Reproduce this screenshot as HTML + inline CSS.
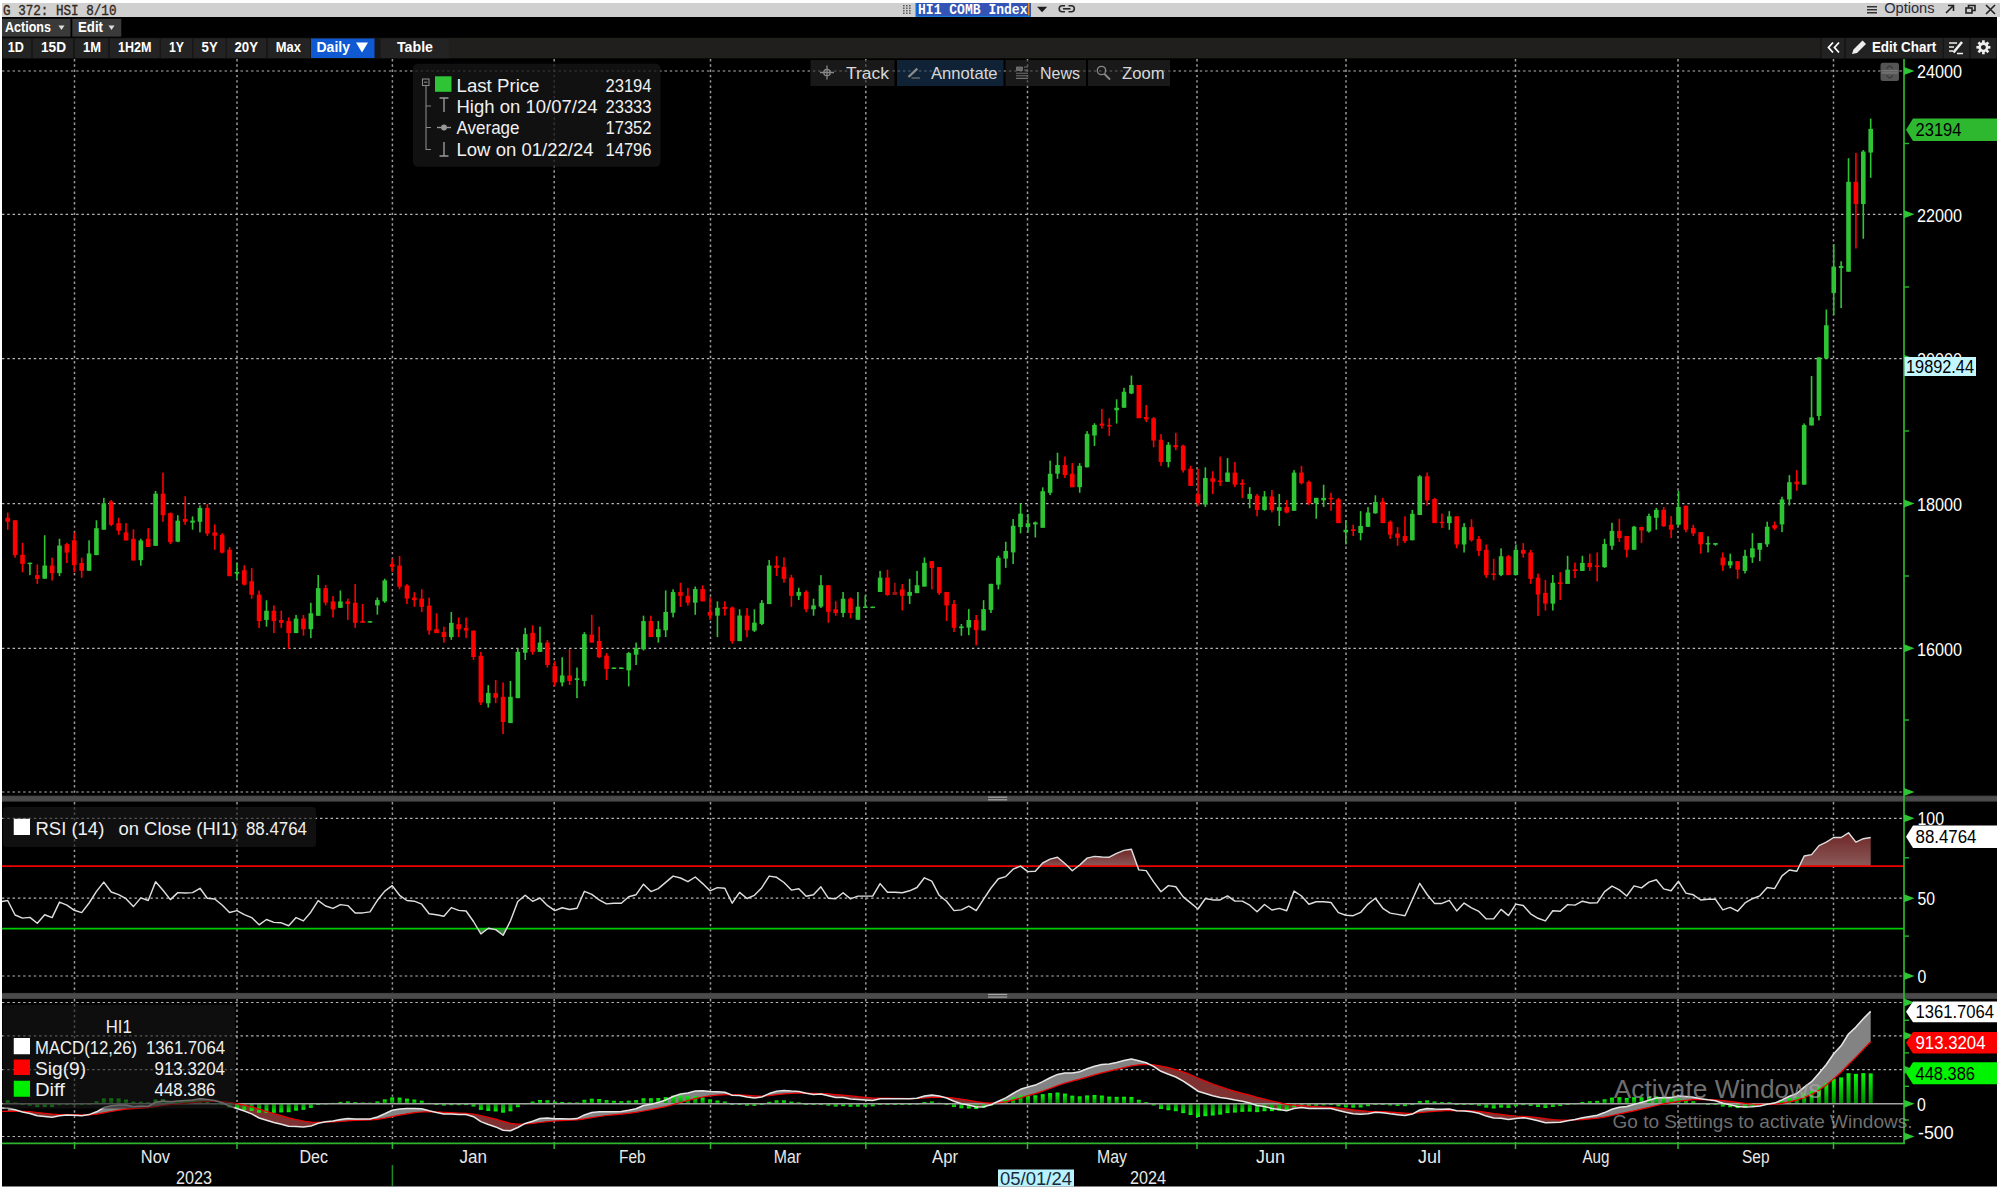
<!DOCTYPE html>
<html><head><meta charset="utf-8"><title>G 372: HSI 8/10</title>
<style>html,body{margin:0;padding:0;background:#000;}body{width:2000px;height:1188px;overflow:hidden;}svg{display:block;font-family:'Liberation Sans', sans-serif;}</style></head>
<body><svg width="2000" height="1188" viewBox="0 0 2000 1188">
<rect x="0.00" y="0.00" width="2000.00" height="1188.00" fill="#000"/>
<line x1="74.50" y1="59.00" x2="74.50" y2="796.00" stroke="#9a9a9a" stroke-width="1.5" stroke-dasharray="2.4 2.9"/>
<line x1="237.00" y1="59.00" x2="237.00" y2="796.00" stroke="#9a9a9a" stroke-width="1.5" stroke-dasharray="2.4 2.9"/>
<line x1="392.40" y1="59.00" x2="392.40" y2="796.00" stroke="#9a9a9a" stroke-width="1.5" stroke-dasharray="2.4 2.9"/>
<line x1="554.20" y1="59.00" x2="554.20" y2="796.00" stroke="#9a9a9a" stroke-width="1.5" stroke-dasharray="2.4 2.9"/>
<line x1="710.50" y1="59.00" x2="710.50" y2="796.00" stroke="#9a9a9a" stroke-width="1.5" stroke-dasharray="2.4 2.9"/>
<line x1="865.80" y1="59.00" x2="865.80" y2="796.00" stroke="#9a9a9a" stroke-width="1.5" stroke-dasharray="2.4 2.9"/>
<line x1="1027.50" y1="59.00" x2="1027.50" y2="796.00" stroke="#9a9a9a" stroke-width="1.5" stroke-dasharray="2.4 2.9"/>
<line x1="1197.00" y1="59.00" x2="1197.00" y2="796.00" stroke="#9a9a9a" stroke-width="1.5" stroke-dasharray="2.4 2.9"/>
<line x1="1346.00" y1="59.00" x2="1346.00" y2="796.00" stroke="#9a9a9a" stroke-width="1.5" stroke-dasharray="2.4 2.9"/>
<line x1="1515.50" y1="59.00" x2="1515.50" y2="796.00" stroke="#9a9a9a" stroke-width="1.5" stroke-dasharray="2.4 2.9"/>
<line x1="1678.00" y1="59.00" x2="1678.00" y2="796.00" stroke="#9a9a9a" stroke-width="1.5" stroke-dasharray="2.4 2.9"/>
<line x1="1833.50" y1="59.00" x2="1833.50" y2="796.00" stroke="#9a9a9a" stroke-width="1.5" stroke-dasharray="2.4 2.9"/>
<line x1="2.00" y1="71.00" x2="1904.00" y2="71.00" stroke="#b8b8b8" stroke-width="1.2" stroke-dasharray="2.4 2.9"/>
<line x1="2.00" y1="214.30" x2="1904.00" y2="214.30" stroke="#b8b8b8" stroke-width="1.2" stroke-dasharray="2.4 2.9"/>
<line x1="2.00" y1="358.70" x2="1904.00" y2="358.70" stroke="#b8b8b8" stroke-width="1.2" stroke-dasharray="2.4 2.9"/>
<line x1="2.00" y1="503.60" x2="1904.00" y2="503.60" stroke="#b8b8b8" stroke-width="1.2" stroke-dasharray="2.4 2.9"/>
<line x1="2.00" y1="648.30" x2="1904.00" y2="648.30" stroke="#b8b8b8" stroke-width="1.2" stroke-dasharray="2.4 2.9"/>
<line x1="2.00" y1="792.00" x2="1904.00" y2="792.00" stroke="#b8b8b8" stroke-width="1.2" stroke-dasharray="2.4 2.9"/>
<line x1="74.50" y1="802.00" x2="74.50" y2="993.00" stroke="#9a9a9a" stroke-width="1.5" stroke-dasharray="2.4 2.9"/>
<line x1="237.00" y1="802.00" x2="237.00" y2="993.00" stroke="#9a9a9a" stroke-width="1.5" stroke-dasharray="2.4 2.9"/>
<line x1="392.40" y1="802.00" x2="392.40" y2="993.00" stroke="#9a9a9a" stroke-width="1.5" stroke-dasharray="2.4 2.9"/>
<line x1="554.20" y1="802.00" x2="554.20" y2="993.00" stroke="#9a9a9a" stroke-width="1.5" stroke-dasharray="2.4 2.9"/>
<line x1="710.50" y1="802.00" x2="710.50" y2="993.00" stroke="#9a9a9a" stroke-width="1.5" stroke-dasharray="2.4 2.9"/>
<line x1="865.80" y1="802.00" x2="865.80" y2="993.00" stroke="#9a9a9a" stroke-width="1.5" stroke-dasharray="2.4 2.9"/>
<line x1="1027.50" y1="802.00" x2="1027.50" y2="993.00" stroke="#9a9a9a" stroke-width="1.5" stroke-dasharray="2.4 2.9"/>
<line x1="1197.00" y1="802.00" x2="1197.00" y2="993.00" stroke="#9a9a9a" stroke-width="1.5" stroke-dasharray="2.4 2.9"/>
<line x1="1346.00" y1="802.00" x2="1346.00" y2="993.00" stroke="#9a9a9a" stroke-width="1.5" stroke-dasharray="2.4 2.9"/>
<line x1="1515.50" y1="802.00" x2="1515.50" y2="993.00" stroke="#9a9a9a" stroke-width="1.5" stroke-dasharray="2.4 2.9"/>
<line x1="1678.00" y1="802.00" x2="1678.00" y2="993.00" stroke="#9a9a9a" stroke-width="1.5" stroke-dasharray="2.4 2.9"/>
<line x1="1833.50" y1="802.00" x2="1833.50" y2="993.00" stroke="#9a9a9a" stroke-width="1.5" stroke-dasharray="2.4 2.9"/>
<line x1="2.00" y1="818.30" x2="1904.00" y2="818.30" stroke="#b8b8b8" stroke-width="1.2" stroke-dasharray="2.4 2.9"/>
<line x1="2.00" y1="898.20" x2="1904.00" y2="898.20" stroke="#b8b8b8" stroke-width="1.2" stroke-dasharray="2.4 2.9"/>
<line x1="2.00" y1="976.00" x2="1904.00" y2="976.00" stroke="#b8b8b8" stroke-width="1.2" stroke-dasharray="2.4 2.9"/>
<line x1="74.50" y1="999.00" x2="74.50" y2="1143.00" stroke="#9a9a9a" stroke-width="1.5" stroke-dasharray="2.4 2.9"/>
<line x1="237.00" y1="999.00" x2="237.00" y2="1143.00" stroke="#9a9a9a" stroke-width="1.5" stroke-dasharray="2.4 2.9"/>
<line x1="392.40" y1="999.00" x2="392.40" y2="1143.00" stroke="#9a9a9a" stroke-width="1.5" stroke-dasharray="2.4 2.9"/>
<line x1="554.20" y1="999.00" x2="554.20" y2="1143.00" stroke="#9a9a9a" stroke-width="1.5" stroke-dasharray="2.4 2.9"/>
<line x1="710.50" y1="999.00" x2="710.50" y2="1143.00" stroke="#9a9a9a" stroke-width="1.5" stroke-dasharray="2.4 2.9"/>
<line x1="865.80" y1="999.00" x2="865.80" y2="1143.00" stroke="#9a9a9a" stroke-width="1.5" stroke-dasharray="2.4 2.9"/>
<line x1="1027.50" y1="999.00" x2="1027.50" y2="1143.00" stroke="#9a9a9a" stroke-width="1.5" stroke-dasharray="2.4 2.9"/>
<line x1="1197.00" y1="999.00" x2="1197.00" y2="1143.00" stroke="#9a9a9a" stroke-width="1.5" stroke-dasharray="2.4 2.9"/>
<line x1="1346.00" y1="999.00" x2="1346.00" y2="1143.00" stroke="#9a9a9a" stroke-width="1.5" stroke-dasharray="2.4 2.9"/>
<line x1="1515.50" y1="999.00" x2="1515.50" y2="1143.00" stroke="#9a9a9a" stroke-width="1.5" stroke-dasharray="2.4 2.9"/>
<line x1="1678.00" y1="999.00" x2="1678.00" y2="1143.00" stroke="#9a9a9a" stroke-width="1.5" stroke-dasharray="2.4 2.9"/>
<line x1="1833.50" y1="999.00" x2="1833.50" y2="1143.00" stroke="#9a9a9a" stroke-width="1.5" stroke-dasharray="2.4 2.9"/>
<line x1="2.00" y1="1002.50" x2="1904.00" y2="1002.50" stroke="#b8b8b8" stroke-width="1.2" stroke-dasharray="2.4 2.9"/>
<line x1="2.00" y1="1035.80" x2="1904.00" y2="1035.80" stroke="#b8b8b8" stroke-width="1.2" stroke-dasharray="2.4 2.9"/>
<line x1="2.00" y1="1069.70" x2="1904.00" y2="1069.70" stroke="#b8b8b8" stroke-width="1.2" stroke-dasharray="2.4 2.9"/>
<line x1="2.00" y1="1136.50" x2="1904.00" y2="1136.50" stroke="#b8b8b8" stroke-width="1.2" stroke-dasharray="2.4 2.9"/>
<!--CANDLES-->
<rect x="6.94" y="512.53" width="1.60" height="17.17" fill="#ff0000"/>
<rect x="5.44" y="517.74" width="4.60" height="4.04" fill="#ff0000"/>
<rect x="14.33" y="520.27" width="1.60" height="37.37" fill="#ff0000"/>
<rect x="12.83" y="520.27" width="4.60" height="34.85" fill="#ff0000"/>
<rect x="21.73" y="542.83" width="1.60" height="29.46" fill="#ff0000"/>
<rect x="20.23" y="554.78" width="4.60" height="9.09" fill="#ff0000"/>
<rect x="29.12" y="562.69" width="1.60" height="12.46" fill="#2fc435"/>
<rect x="27.62" y="562.69" width="4.60" height="1.50" fill="#2fc435"/>
<rect x="36.51" y="564.38" width="1.60" height="19.70" fill="#ff0000"/>
<rect x="35.01" y="575.15" width="4.60" height="3.87" fill="#ff0000"/>
<rect x="43.90" y="535.25" width="1.60" height="43.43" fill="#2fc435"/>
<rect x="42.40" y="565.56" width="4.60" height="13.13" fill="#2fc435"/>
<rect x="51.30" y="557.64" width="1.60" height="22.90" fill="#ff0000"/>
<rect x="49.80" y="565.56" width="4.60" height="7.58" fill="#ff0000"/>
<rect x="58.69" y="538.79" width="1.60" height="37.37" fill="#2fc435"/>
<rect x="57.19" y="545.52" width="4.60" height="27.61" fill="#2fc435"/>
<rect x="66.08" y="542.83" width="1.60" height="20.20" fill="#ff0000"/>
<rect x="64.58" y="544.18" width="4.60" height="8.42" fill="#ff0000"/>
<rect x="73.47" y="532.39" width="1.60" height="39.90" fill="#ff0000"/>
<rect x="71.97" y="540.30" width="4.60" height="24.92" fill="#ff0000"/>
<rect x="80.87" y="557.64" width="1.60" height="20.20" fill="#ff0000"/>
<rect x="79.37" y="563.03" width="4.60" height="7.74" fill="#ff0000"/>
<rect x="88.26" y="540.30" width="1.60" height="30.47" fill="#2fc435"/>
<rect x="86.76" y="553.43" width="4.60" height="17.34" fill="#2fc435"/>
<rect x="95.65" y="520.27" width="1.60" height="34.85" fill="#2fc435"/>
<rect x="94.15" y="528.18" width="4.60" height="26.94" fill="#2fc435"/>
<rect x="103.05" y="497.88" width="1.60" height="31.82" fill="#2fc435"/>
<rect x="101.55" y="503.27" width="4.60" height="26.43" fill="#2fc435"/>
<rect x="110.44" y="500.07" width="1.60" height="25.93" fill="#ff0000"/>
<rect x="108.94" y="501.41" width="4.60" height="23.40" fill="#ff0000"/>
<rect x="117.83" y="517.74" width="1.60" height="17.17" fill="#ff0000"/>
<rect x="116.33" y="523.13" width="4.60" height="7.58" fill="#ff0000"/>
<rect x="125.22" y="523.13" width="1.60" height="17.34" fill="#ff0000"/>
<rect x="123.72" y="532.39" width="4.60" height="8.08" fill="#ff0000"/>
<rect x="132.62" y="529.36" width="1.60" height="31.14" fill="#ff0000"/>
<rect x="131.12" y="538.79" width="4.60" height="21.72" fill="#ff0000"/>
<rect x="140.01" y="538.79" width="1.60" height="26.94" fill="#2fc435"/>
<rect x="138.51" y="540.47" width="4.60" height="19.70" fill="#2fc435"/>
<rect x="147.40" y="528.18" width="1.60" height="18.86" fill="#ff0000"/>
<rect x="145.90" y="538.79" width="4.60" height="8.25" fill="#ff0000"/>
<rect x="154.79" y="490.98" width="1.60" height="54.88" fill="#2fc435"/>
<rect x="153.29" y="493.67" width="4.60" height="52.19" fill="#2fc435"/>
<rect x="162.19" y="472.63" width="1.60" height="49.16" fill="#ff0000"/>
<rect x="160.69" y="493.67" width="4.60" height="21.55" fill="#ff0000"/>
<rect x="169.58" y="512.53" width="1.60" height="31.65" fill="#ff0000"/>
<rect x="168.08" y="513.20" width="4.60" height="28.96" fill="#ff0000"/>
<rect x="176.97" y="515.22" width="1.60" height="26.94" fill="#2fc435"/>
<rect x="175.47" y="520.61" width="4.60" height="21.04" fill="#2fc435"/>
<rect x="184.36" y="496.20" width="1.60" height="28.62" fill="#ff0000"/>
<rect x="182.86" y="518.92" width="4.60" height="2.86" fill="#ff0000"/>
<rect x="191.76" y="516.40" width="1.60" height="13.30" fill="#2fc435"/>
<rect x="190.26" y="520.61" width="4.60" height="2.02" fill="#2fc435"/>
<rect x="199.15" y="505.45" width="1.60" height="26.94" fill="#2fc435"/>
<rect x="197.65" y="507.98" width="4.60" height="13.80" fill="#2fc435"/>
<rect x="206.54" y="504.11" width="1.60" height="31.99" fill="#ff0000"/>
<rect x="205.04" y="507.98" width="4.60" height="25.59" fill="#ff0000"/>
<rect x="213.94" y="524.48" width="1.60" height="25.25" fill="#ff0000"/>
<rect x="212.44" y="532.39" width="4.60" height="3.37" fill="#ff0000"/>
<rect x="221.33" y="533.23" width="1.60" height="20.20" fill="#ff0000"/>
<rect x="219.83" y="534.92" width="4.60" height="17.68" fill="#ff0000"/>
<rect x="228.72" y="547.04" width="1.60" height="29.12" fill="#ff0000"/>
<rect x="227.22" y="549.73" width="4.60" height="26.43" fill="#ff0000"/>
<rect x="236.11" y="562.69" width="1.60" height="16.33" fill="#2fc435"/>
<rect x="234.61" y="571.95" width="4.60" height="1.68" fill="#2fc435"/>
<rect x="243.51" y="565.22" width="1.60" height="20.20" fill="#ff0000"/>
<rect x="242.01" y="570.27" width="4.60" height="14.31" fill="#ff0000"/>
<rect x="250.90" y="568.11" width="1.60" height="30.47" fill="#ff0000"/>
<rect x="249.40" y="581.25" width="4.60" height="13.47" fill="#ff0000"/>
<rect x="258.29" y="590.51" width="1.60" height="37.54" fill="#ff0000"/>
<rect x="256.79" y="594.71" width="4.60" height="26.43" fill="#ff0000"/>
<rect x="265.68" y="600.27" width="1.60" height="26.43" fill="#2fc435"/>
<rect x="264.18" y="610.71" width="4.60" height="9.26" fill="#2fc435"/>
<rect x="273.08" y="605.32" width="1.60" height="27.78" fill="#ff0000"/>
<rect x="271.58" y="610.71" width="4.60" height="10.44" fill="#ff0000"/>
<rect x="280.47" y="610.71" width="1.60" height="17.17" fill="#ff0000"/>
<rect x="278.97" y="619.97" width="4.60" height="2.86" fill="#ff0000"/>
<rect x="287.86" y="617.44" width="1.60" height="31.48" fill="#ff0000"/>
<rect x="286.36" y="621.14" width="4.60" height="11.95" fill="#ff0000"/>
<rect x="295.26" y="614.92" width="1.60" height="18.18" fill="#2fc435"/>
<rect x="293.76" y="618.62" width="4.60" height="14.48" fill="#2fc435"/>
<rect x="302.65" y="614.92" width="1.60" height="20.71" fill="#ff0000"/>
<rect x="301.15" y="618.62" width="4.60" height="10.61" fill="#ff0000"/>
<rect x="310.04" y="602.79" width="1.60" height="35.35" fill="#2fc435"/>
<rect x="308.54" y="613.23" width="4.60" height="15.99" fill="#2fc435"/>
<rect x="317.43" y="575.02" width="1.60" height="40.74" fill="#2fc435"/>
<rect x="315.93" y="588.15" width="4.60" height="27.61" fill="#2fc435"/>
<rect x="324.83" y="585.12" width="1.60" height="20.20" fill="#ff0000"/>
<rect x="323.33" y="588.15" width="4.60" height="14.48" fill="#ff0000"/>
<rect x="332.22" y="596.06" width="1.60" height="21.38" fill="#ff0000"/>
<rect x="330.72" y="601.45" width="4.60" height="7.91" fill="#ff0000"/>
<rect x="339.61" y="590.51" width="1.60" height="17.34" fill="#2fc435"/>
<rect x="338.11" y="601.45" width="4.60" height="6.40" fill="#2fc435"/>
<rect x="347.00" y="598.59" width="1.60" height="21.38" fill="#ff0000"/>
<rect x="345.50" y="601.45" width="4.60" height="2.53" fill="#ff0000"/>
<rect x="354.40" y="584.11" width="1.60" height="43.77" fill="#ff0000"/>
<rect x="352.90" y="602.79" width="4.60" height="20.03" fill="#ff0000"/>
<rect x="361.79" y="603.97" width="1.60" height="18.52" fill="#ff0000"/>
<rect x="360.29" y="621.14" width="4.60" height="1.68" fill="#ff0000"/>
<rect x="369.18" y="621.14" width="1.60" height="1.35" fill="#2fc435"/>
<rect x="367.68" y="621.14" width="4.60" height="1.50" fill="#2fc435"/>
<rect x="376.57" y="597.58" width="1.60" height="17.00" fill="#2fc435"/>
<rect x="375.07" y="600.10" width="4.60" height="5.22" fill="#2fc435"/>
<rect x="383.97" y="578.72" width="1.60" height="24.07" fill="#2fc435"/>
<rect x="382.47" y="580.40" width="4.60" height="21.04" fill="#2fc435"/>
<rect x="391.36" y="558.52" width="1.60" height="13.47" fill="#ff0000"/>
<rect x="389.86" y="564.07" width="4.60" height="2.86" fill="#ff0000"/>
<rect x="398.75" y="555.99" width="1.60" height="33.33" fill="#ff0000"/>
<rect x="397.25" y="565.59" width="4.60" height="21.21" fill="#ff0000"/>
<rect x="406.15" y="584.11" width="1.60" height="19.87" fill="#ff0000"/>
<rect x="404.65" y="585.45" width="4.60" height="13.13" fill="#ff0000"/>
<rect x="413.54" y="592.19" width="1.60" height="14.65" fill="#ff0000"/>
<rect x="412.04" y="597.58" width="4.60" height="2.53" fill="#ff0000"/>
<rect x="420.93" y="589.33" width="1.60" height="22.73" fill="#ff0000"/>
<rect x="419.43" y="598.59" width="4.60" height="8.25" fill="#ff0000"/>
<rect x="428.32" y="597.58" width="1.60" height="37.04" fill="#ff0000"/>
<rect x="426.82" y="605.66" width="4.60" height="24.92" fill="#ff0000"/>
<rect x="435.72" y="613.23" width="1.60" height="19.87" fill="#ff0000"/>
<rect x="434.22" y="629.23" width="4.60" height="3.87" fill="#ff0000"/>
<rect x="443.11" y="626.70" width="1.60" height="15.99" fill="#ff0000"/>
<rect x="441.61" y="632.09" width="4.60" height="5.05" fill="#ff0000"/>
<rect x="450.50" y="612.05" width="1.60" height="27.78" fill="#2fc435"/>
<rect x="449.00" y="622.83" width="4.60" height="14.31" fill="#2fc435"/>
<rect x="457.89" y="617.44" width="1.60" height="19.70" fill="#ff0000"/>
<rect x="456.39" y="624.18" width="4.60" height="5.05" fill="#ff0000"/>
<rect x="465.29" y="617.44" width="1.60" height="20.71" fill="#ff0000"/>
<rect x="463.79" y="627.88" width="4.60" height="2.69" fill="#ff0000"/>
<rect x="472.68" y="630.57" width="1.60" height="29.29" fill="#ff0000"/>
<rect x="471.18" y="630.57" width="4.60" height="26.43" fill="#ff0000"/>
<rect x="480.07" y="651.95" width="1.60" height="53.03" fill="#ff0000"/>
<rect x="478.57" y="655.82" width="4.60" height="46.63" fill="#ff0000"/>
<rect x="487.47" y="685.12" width="1.60" height="22.39" fill="#2fc435"/>
<rect x="485.97" y="692.86" width="4.60" height="10.44" fill="#2fc435"/>
<rect x="494.86" y="679.97" width="1.60" height="23.23" fill="#ff0000"/>
<rect x="493.36" y="693.10" width="4.60" height="4.71" fill="#ff0000"/>
<rect x="502.25" y="682.49" width="1.60" height="51.52" fill="#ff0000"/>
<rect x="500.75" y="696.80" width="4.60" height="25.25" fill="#ff0000"/>
<rect x="509.64" y="680.98" width="1.60" height="42.09" fill="#2fc435"/>
<rect x="508.14" y="696.80" width="4.60" height="26.26" fill="#2fc435"/>
<rect x="517.04" y="648.48" width="1.60" height="49.66" fill="#2fc435"/>
<rect x="515.54" y="651.85" width="4.60" height="46.30" fill="#2fc435"/>
<rect x="524.43" y="627.78" width="1.60" height="32.15" fill="#2fc435"/>
<rect x="522.93" y="634.18" width="4.60" height="18.52" fill="#2fc435"/>
<rect x="531.82" y="625.25" width="1.60" height="29.46" fill="#ff0000"/>
<rect x="530.32" y="632.83" width="4.60" height="19.02" fill="#ff0000"/>
<rect x="539.21" y="626.60" width="1.60" height="25.25" fill="#2fc435"/>
<rect x="537.71" y="642.59" width="4.60" height="9.26" fill="#2fc435"/>
<rect x="546.61" y="640.07" width="1.60" height="27.44" fill="#ff0000"/>
<rect x="545.11" y="642.59" width="4.60" height="22.39" fill="#ff0000"/>
<rect x="554.00" y="661.11" width="1.60" height="25.25" fill="#ff0000"/>
<rect x="552.50" y="666.16" width="4.60" height="16.33" fill="#ff0000"/>
<rect x="561.39" y="657.24" width="1.60" height="29.12" fill="#2fc435"/>
<rect x="559.89" y="675.42" width="4.60" height="7.07" fill="#2fc435"/>
<rect x="568.79" y="649.33" width="1.60" height="35.69" fill="#ff0000"/>
<rect x="567.29" y="675.42" width="4.60" height="5.56" fill="#ff0000"/>
<rect x="576.18" y="667.51" width="1.60" height="30.64" fill="#2fc435"/>
<rect x="574.68" y="678.28" width="4.60" height="1.68" fill="#2fc435"/>
<rect x="583.57" y="632.15" width="1.60" height="54.21" fill="#2fc435"/>
<rect x="582.07" y="634.18" width="4.60" height="46.80" fill="#2fc435"/>
<rect x="590.96" y="614.81" width="1.60" height="27.78" fill="#ff0000"/>
<rect x="589.46" y="634.68" width="4.60" height="7.91" fill="#ff0000"/>
<rect x="598.36" y="626.60" width="1.60" height="31.48" fill="#ff0000"/>
<rect x="596.86" y="640.91" width="4.60" height="16.33" fill="#ff0000"/>
<rect x="605.75" y="653.03" width="1.60" height="26.94" fill="#ff0000"/>
<rect x="604.25" y="655.56" width="4.60" height="13.47" fill="#ff0000"/>
<rect x="613.14" y="667.51" width="1.60" height="1.52" fill="#2fc435"/>
<rect x="611.64" y="667.51" width="4.60" height="1.52" fill="#2fc435"/>
<rect x="620.53" y="667.51" width="1.60" height="1.52" fill="#2fc435"/>
<rect x="619.03" y="667.51" width="4.60" height="1.52" fill="#2fc435"/>
<rect x="627.93" y="651.85" width="1.60" height="34.51" fill="#2fc435"/>
<rect x="626.43" y="653.03" width="4.60" height="17.34" fill="#2fc435"/>
<rect x="635.32" y="642.59" width="1.60" height="22.39" fill="#2fc435"/>
<rect x="633.82" y="648.15" width="4.60" height="6.57" fill="#2fc435"/>
<rect x="642.71" y="615.66" width="1.60" height="34.85" fill="#2fc435"/>
<rect x="641.21" y="621.04" width="4.60" height="28.28" fill="#2fc435"/>
<rect x="650.10" y="615.66" width="1.60" height="21.38" fill="#ff0000"/>
<rect x="648.60" y="621.04" width="4.60" height="15.99" fill="#ff0000"/>
<rect x="657.50" y="621.04" width="1.60" height="21.55" fill="#2fc435"/>
<rect x="656.00" y="629.12" width="4.60" height="7.91" fill="#2fc435"/>
<rect x="664.89" y="590.40" width="1.60" height="46.63" fill="#2fc435"/>
<rect x="663.39" y="611.95" width="4.60" height="18.35" fill="#2fc435"/>
<rect x="672.28" y="589.23" width="1.60" height="28.11" fill="#2fc435"/>
<rect x="670.78" y="592.09" width="4.60" height="20.71" fill="#2fc435"/>
<rect x="679.68" y="582.83" width="1.60" height="24.07" fill="#ff0000"/>
<rect x="678.18" y="592.09" width="4.60" height="3.70" fill="#ff0000"/>
<rect x="687.07" y="587.88" width="1.60" height="17.68" fill="#ff0000"/>
<rect x="685.57" y="595.79" width="4.60" height="6.90" fill="#ff0000"/>
<rect x="694.46" y="586.53" width="1.60" height="28.28" fill="#2fc435"/>
<rect x="692.96" y="589.06" width="4.60" height="13.64" fill="#2fc435"/>
<rect x="701.85" y="585.35" width="1.60" height="15.99" fill="#ff0000"/>
<rect x="700.35" y="589.06" width="4.60" height="12.29" fill="#ff0000"/>
<rect x="709.25" y="597.14" width="1.60" height="22.73" fill="#ff0000"/>
<rect x="707.75" y="611.95" width="4.60" height="3.70" fill="#ff0000"/>
<rect x="716.64" y="601.35" width="1.60" height="35.69" fill="#2fc435"/>
<rect x="715.14" y="607.74" width="4.60" height="7.91" fill="#2fc435"/>
<rect x="724.03" y="601.35" width="1.60" height="14.31" fill="#ff0000"/>
<rect x="722.53" y="606.90" width="4.60" height="2.02" fill="#ff0000"/>
<rect x="731.42" y="606.60" width="1.60" height="37.04" fill="#ff0000"/>
<rect x="729.92" y="607.61" width="4.60" height="33.50" fill="#ff0000"/>
<rect x="738.82" y="609.29" width="1.60" height="31.82" fill="#2fc435"/>
<rect x="737.32" y="615.52" width="4.60" height="25.59" fill="#2fc435"/>
<rect x="746.21" y="607.95" width="1.60" height="29.46" fill="#ff0000"/>
<rect x="744.71" y="615.52" width="4.60" height="14.65" fill="#ff0000"/>
<rect x="753.60" y="609.29" width="1.60" height="22.73" fill="#2fc435"/>
<rect x="752.10" y="622.59" width="4.60" height="8.08" fill="#2fc435"/>
<rect x="761.00" y="600.03" width="1.60" height="25.08" fill="#2fc435"/>
<rect x="759.50" y="602.90" width="4.60" height="21.04" fill="#2fc435"/>
<rect x="768.39" y="559.97" width="1.60" height="44.11" fill="#2fc435"/>
<rect x="766.89" y="565.52" width="4.60" height="38.55" fill="#2fc435"/>
<rect x="775.78" y="556.09" width="1.60" height="19.87" fill="#ff0000"/>
<rect x="774.28" y="565.52" width="4.60" height="2.53" fill="#ff0000"/>
<rect x="783.17" y="557.44" width="1.60" height="25.25" fill="#ff0000"/>
<rect x="781.67" y="567.04" width="4.60" height="11.78" fill="#ff0000"/>
<rect x="790.57" y="574.78" width="1.60" height="31.99" fill="#ff0000"/>
<rect x="789.07" y="577.64" width="4.60" height="18.18" fill="#ff0000"/>
<rect x="797.96" y="587.74" width="1.60" height="12.29" fill="#2fc435"/>
<rect x="796.46" y="591.95" width="4.60" height="3.87" fill="#2fc435"/>
<rect x="805.35" y="590.27" width="1.60" height="21.89" fill="#ff0000"/>
<rect x="803.85" y="591.95" width="4.60" height="17.34" fill="#ff0000"/>
<rect x="812.74" y="598.69" width="1.60" height="17.00" fill="#2fc435"/>
<rect x="811.24" y="605.42" width="4.60" height="3.87" fill="#2fc435"/>
<rect x="820.14" y="575.12" width="1.60" height="32.83" fill="#2fc435"/>
<rect x="818.64" y="585.22" width="4.60" height="21.38" fill="#2fc435"/>
<rect x="827.53" y="585.22" width="1.60" height="37.54" fill="#ff0000"/>
<rect x="826.03" y="585.22" width="4.60" height="26.60" fill="#ff0000"/>
<rect x="834.92" y="601.21" width="1.60" height="14.48" fill="#ff0000"/>
<rect x="833.42" y="609.29" width="4.60" height="3.70" fill="#ff0000"/>
<rect x="842.31" y="591.95" width="1.60" height="25.25" fill="#2fc435"/>
<rect x="840.81" y="598.69" width="4.60" height="14.31" fill="#2fc435"/>
<rect x="849.71" y="597.51" width="1.60" height="20.88" fill="#ff0000"/>
<rect x="848.21" y="598.69" width="4.60" height="14.31" fill="#ff0000"/>
<rect x="857.10" y="591.95" width="1.60" height="27.78" fill="#2fc435"/>
<rect x="855.60" y="606.60" width="4.60" height="13.13" fill="#2fc435"/>
<rect x="864.49" y="595.32" width="1.60" height="12.63" fill="#2fc435"/>
<rect x="862.99" y="606.60" width="4.60" height="1.50" fill="#2fc435"/>
<rect x="871.89" y="606.60" width="1.60" height="1.35" fill="#2fc435"/>
<rect x="870.39" y="606.60" width="4.60" height="1.50" fill="#2fc435"/>
<rect x="879.28" y="570.91" width="1.60" height="21.04" fill="#2fc435"/>
<rect x="877.78" y="577.64" width="4.60" height="14.31" fill="#2fc435"/>
<rect x="886.67" y="569.73" width="1.60" height="26.09" fill="#ff0000"/>
<rect x="885.17" y="577.64" width="4.60" height="17.34" fill="#ff0000"/>
<rect x="894.06" y="582.69" width="1.60" height="12.29" fill="#a01010"/>
<rect x="892.56" y="591.95" width="4.60" height="3.03" fill="#a01010"/>
<rect x="901.46" y="584.04" width="1.60" height="26.43" fill="#ff0000"/>
<rect x="899.96" y="589.43" width="4.60" height="6.40" fill="#ff0000"/>
<rect x="908.85" y="578.82" width="1.60" height="25.25" fill="#2fc435"/>
<rect x="907.35" y="591.95" width="4.60" height="3.87" fill="#2fc435"/>
<rect x="916.24" y="570.91" width="1.60" height="22.22" fill="#2fc435"/>
<rect x="914.74" y="585.22" width="4.60" height="7.91" fill="#2fc435"/>
<rect x="923.63" y="557.44" width="1.60" height="29.12" fill="#2fc435"/>
<rect x="922.13" y="562.83" width="4.60" height="23.74" fill="#2fc435"/>
<rect x="931.03" y="561.14" width="1.60" height="28.28" fill="#ff0000"/>
<rect x="929.53" y="561.14" width="4.60" height="6.90" fill="#ff0000"/>
<rect x="938.42" y="567.04" width="1.60" height="27.95" fill="#ff0000"/>
<rect x="936.92" y="567.04" width="4.60" height="26.09" fill="#ff0000"/>
<rect x="945.81" y="591.95" width="1.60" height="28.96" fill="#ff0000"/>
<rect x="944.31" y="591.95" width="4.60" height="13.47" fill="#ff0000"/>
<rect x="953.21" y="600.03" width="1.60" height="31.99" fill="#ff0000"/>
<rect x="951.71" y="604.07" width="4.60" height="23.74" fill="#ff0000"/>
<rect x="960.60" y="623.94" width="1.60" height="11.78" fill="#2fc435"/>
<rect x="959.10" y="626.46" width="4.60" height="1.68" fill="#2fc435"/>
<rect x="967.99" y="609.09" width="1.60" height="26.09" fill="#2fc435"/>
<rect x="966.49" y="620.03" width="4.60" height="7.58" fill="#2fc435"/>
<rect x="975.38" y="614.98" width="1.60" height="30.30" fill="#ff0000"/>
<rect x="973.88" y="620.03" width="4.60" height="10.10" fill="#ff0000"/>
<rect x="982.78" y="600.17" width="1.60" height="30.30" fill="#2fc435"/>
<rect x="981.28" y="609.09" width="4.60" height="21.38" fill="#2fc435"/>
<rect x="990.17" y="583.84" width="1.60" height="29.12" fill="#2fc435"/>
<rect x="988.67" y="583.84" width="4.60" height="26.09" fill="#2fc435"/>
<rect x="997.56" y="555.72" width="1.60" height="33.67" fill="#2fc435"/>
<rect x="996.06" y="557.74" width="4.60" height="26.94" fill="#2fc435"/>
<rect x="1004.95" y="541.75" width="1.60" height="26.09" fill="#2fc435"/>
<rect x="1003.45" y="551.01" width="4.60" height="7.58" fill="#2fc435"/>
<rect x="1012.35" y="519.02" width="1.60" height="44.95" fill="#2fc435"/>
<rect x="1010.85" y="525.76" width="4.60" height="26.60" fill="#2fc435"/>
<rect x="1019.74" y="503.54" width="1.60" height="29.80" fill="#2fc435"/>
<rect x="1018.24" y="513.64" width="4.60" height="13.47" fill="#2fc435"/>
<rect x="1027.13" y="513.97" width="1.60" height="18.52" fill="#2fc435"/>
<rect x="1025.63" y="523.23" width="4.60" height="3.87" fill="#2fc435"/>
<rect x="1034.53" y="521.55" width="1.60" height="15.99" fill="#2fc435"/>
<rect x="1033.03" y="522.39" width="4.60" height="2.02" fill="#2fc435"/>
<rect x="1041.92" y="487.37" width="1.60" height="40.40" fill="#2fc435"/>
<rect x="1040.42" y="491.25" width="4.60" height="36.53" fill="#2fc435"/>
<rect x="1049.31" y="460.61" width="1.60" height="34.51" fill="#2fc435"/>
<rect x="1047.81" y="473.74" width="4.60" height="19.02" fill="#2fc435"/>
<rect x="1056.70" y="452.69" width="1.60" height="26.09" fill="#2fc435"/>
<rect x="1055.20" y="464.98" width="4.60" height="8.75" fill="#2fc435"/>
<rect x="1064.10" y="456.57" width="1.60" height="21.38" fill="#ff0000"/>
<rect x="1062.60" y="464.98" width="4.60" height="10.10" fill="#ff0000"/>
<rect x="1071.49" y="463.13" width="1.60" height="24.07" fill="#ff0000"/>
<rect x="1069.99" y="473.74" width="4.60" height="13.47" fill="#ff0000"/>
<rect x="1078.88" y="463.13" width="1.60" height="29.63" fill="#2fc435"/>
<rect x="1077.38" y="465.82" width="4.60" height="21.38" fill="#2fc435"/>
<rect x="1086.27" y="431.14" width="1.60" height="36.20" fill="#2fc435"/>
<rect x="1084.77" y="433.84" width="4.60" height="33.50" fill="#2fc435"/>
<rect x="1093.67" y="423.23" width="1.60" height="22.73" fill="#2fc435"/>
<rect x="1092.17" y="424.92" width="4.60" height="10.61" fill="#2fc435"/>
<rect x="1101.06" y="408.92" width="1.60" height="19.70" fill="#ff0000"/>
<rect x="1099.56" y="423.57" width="4.60" height="2.19" fill="#ff0000"/>
<rect x="1108.45" y="418.18" width="1.60" height="17.68" fill="#ff0000"/>
<rect x="1106.95" y="424.92" width="4.60" height="1.50" fill="#ff0000"/>
<rect x="1115.84" y="399.33" width="1.60" height="24.24" fill="#2fc435"/>
<rect x="1114.34" y="407.74" width="4.60" height="2.53" fill="#2fc435"/>
<rect x="1123.24" y="387.88" width="1.60" height="19.87" fill="#2fc435"/>
<rect x="1121.74" y="391.75" width="4.60" height="15.99" fill="#2fc435"/>
<rect x="1130.63" y="375.59" width="1.60" height="18.52" fill="#2fc435"/>
<rect x="1129.13" y="385.02" width="4.60" height="8.42" fill="#2fc435"/>
<rect x="1138.02" y="385.02" width="1.60" height="33.16" fill="#ff0000"/>
<rect x="1136.52" y="385.02" width="4.60" height="33.16" fill="#ff0000"/>
<rect x="1145.42" y="405.05" width="1.60" height="17.00" fill="#ff0000"/>
<rect x="1143.92" y="417.00" width="4.60" height="2.36" fill="#ff0000"/>
<rect x="1152.81" y="417.00" width="1.60" height="30.30" fill="#ff0000"/>
<rect x="1151.31" y="418.18" width="4.60" height="22.39" fill="#ff0000"/>
<rect x="1160.20" y="434.18" width="1.60" height="31.65" fill="#ff0000"/>
<rect x="1158.70" y="439.73" width="4.60" height="22.22" fill="#ff0000"/>
<rect x="1167.59" y="442.09" width="1.60" height="25.25" fill="#2fc435"/>
<rect x="1166.09" y="444.78" width="4.60" height="17.17" fill="#2fc435"/>
<rect x="1174.99" y="432.83" width="1.60" height="17.34" fill="#ff0000"/>
<rect x="1173.49" y="445.12" width="4.60" height="2.19" fill="#ff0000"/>
<rect x="1182.38" y="444.78" width="1.60" height="27.78" fill="#ff0000"/>
<rect x="1180.88" y="445.62" width="4.60" height="24.75" fill="#ff0000"/>
<rect x="1189.77" y="465.82" width="1.60" height="20.03" fill="#ff0000"/>
<rect x="1188.27" y="468.69" width="4.60" height="17.17" fill="#ff0000"/>
<rect x="1197.16" y="468.69" width="1.60" height="37.04" fill="#ff0000"/>
<rect x="1195.66" y="493.94" width="4.60" height="9.26" fill="#ff0000"/>
<rect x="1204.56" y="467.34" width="1.60" height="39.73" fill="#2fc435"/>
<rect x="1203.06" y="477.95" width="4.60" height="26.60" fill="#2fc435"/>
<rect x="1211.95" y="471.21" width="1.60" height="22.73" fill="#ff0000"/>
<rect x="1210.45" y="478.28" width="4.60" height="3.54" fill="#ff0000"/>
<rect x="1219.34" y="456.57" width="1.60" height="29.29" fill="#ff0000"/>
<rect x="1217.84" y="480.47" width="4.60" height="1.50" fill="#ff0000"/>
<rect x="1226.74" y="458.08" width="1.60" height="23.74" fill="#2fc435"/>
<rect x="1225.24" y="472.56" width="4.60" height="9.26" fill="#2fc435"/>
<rect x="1234.13" y="461.95" width="1.60" height="25.25" fill="#ff0000"/>
<rect x="1232.63" y="472.56" width="4.60" height="12.12" fill="#ff0000"/>
<rect x="1241.52" y="479.29" width="1.60" height="18.86" fill="#ff0000"/>
<rect x="1240.02" y="483.00" width="4.60" height="1.68" fill="#ff0000"/>
<rect x="1248.91" y="487.21" width="1.60" height="21.04" fill="#2fc435"/>
<rect x="1247.41" y="493.94" width="4.60" height="5.05" fill="#2fc435"/>
<rect x="1256.31" y="493.94" width="1.60" height="22.39" fill="#ff0000"/>
<rect x="1254.81" y="495.62" width="4.60" height="14.31" fill="#ff0000"/>
<rect x="1263.70" y="491.08" width="1.60" height="19.70" fill="#2fc435"/>
<rect x="1262.20" y="496.46" width="4.60" height="13.47" fill="#2fc435"/>
<rect x="1271.09" y="490.07" width="1.60" height="22.39" fill="#ff0000"/>
<rect x="1269.59" y="496.46" width="4.60" height="13.47" fill="#ff0000"/>
<rect x="1278.48" y="493.94" width="1.60" height="31.99" fill="#2fc435"/>
<rect x="1276.98" y="507.07" width="4.60" height="3.70" fill="#2fc435"/>
<rect x="1285.88" y="500.17" width="1.60" height="13.13" fill="#ff0000"/>
<rect x="1284.38" y="507.07" width="4.60" height="5.39" fill="#ff0000"/>
<rect x="1293.27" y="470.07" width="1.60" height="40.74" fill="#2fc435"/>
<rect x="1291.77" y="472.59" width="4.60" height="38.22" fill="#2fc435"/>
<rect x="1300.66" y="465.86" width="1.60" height="18.52" fill="#ff0000"/>
<rect x="1299.16" y="472.59" width="4.60" height="10.61" fill="#ff0000"/>
<rect x="1308.05" y="480.51" width="1.60" height="24.41" fill="#ff0000"/>
<rect x="1306.55" y="481.85" width="4.60" height="21.38" fill="#ff0000"/>
<rect x="1315.45" y="497.85" width="1.60" height="20.88" fill="#2fc435"/>
<rect x="1313.95" y="497.85" width="4.60" height="5.39" fill="#2fc435"/>
<rect x="1322.84" y="484.71" width="1.60" height="22.39" fill="#2fc435"/>
<rect x="1321.34" y="497.85" width="4.60" height="2.53" fill="#2fc435"/>
<rect x="1330.23" y="492.79" width="1.60" height="18.01" fill="#ff0000"/>
<rect x="1328.73" y="497.85" width="4.60" height="1.52" fill="#ff0000"/>
<rect x="1337.63" y="497.85" width="1.60" height="25.25" fill="#ff0000"/>
<rect x="1336.13" y="499.36" width="4.60" height="23.74" fill="#ff0000"/>
<rect x="1345.02" y="520.57" width="1.60" height="23.91" fill="#2fc435"/>
<rect x="1343.52" y="529.83" width="4.60" height="2.53" fill="#2fc435"/>
<rect x="1352.41" y="524.61" width="1.60" height="11.45" fill="#ff0000"/>
<rect x="1350.91" y="529.33" width="4.60" height="1.68" fill="#ff0000"/>
<rect x="1359.80" y="511.14" width="1.60" height="29.12" fill="#2fc435"/>
<rect x="1358.30" y="525.96" width="4.60" height="7.07" fill="#2fc435"/>
<rect x="1367.20" y="507.10" width="1.60" height="20.03" fill="#2fc435"/>
<rect x="1365.70" y="512.49" width="4.60" height="14.31" fill="#2fc435"/>
<rect x="1374.59" y="495.32" width="1.60" height="18.35" fill="#2fc435"/>
<rect x="1373.09" y="502.05" width="4.60" height="11.28" fill="#2fc435"/>
<rect x="1381.98" y="497.85" width="1.60" height="25.25" fill="#ff0000"/>
<rect x="1380.48" y="501.55" width="4.60" height="21.55" fill="#ff0000"/>
<rect x="1389.37" y="520.57" width="1.60" height="18.35" fill="#ff0000"/>
<rect x="1387.87" y="521.75" width="4.60" height="12.96" fill="#ff0000"/>
<rect x="1396.77" y="527.14" width="1.60" height="18.69" fill="#ff0000"/>
<rect x="1395.27" y="533.54" width="4.60" height="4.21" fill="#ff0000"/>
<rect x="1404.16" y="516.36" width="1.60" height="26.77" fill="#ff0000"/>
<rect x="1402.66" y="536.06" width="4.60" height="5.05" fill="#ff0000"/>
<rect x="1411.55" y="509.97" width="1.60" height="30.30" fill="#2fc435"/>
<rect x="1410.05" y="513.84" width="4.60" height="26.43" fill="#2fc435"/>
<rect x="1418.95" y="475.12" width="1.60" height="39.90" fill="#2fc435"/>
<rect x="1417.45" y="476.30" width="4.60" height="38.72" fill="#2fc435"/>
<rect x="1426.34" y="472.59" width="1.60" height="33.16" fill="#ff0000"/>
<rect x="1424.84" y="476.30" width="4.60" height="24.07" fill="#ff0000"/>
<rect x="1433.73" y="497.85" width="1.60" height="25.25" fill="#ff0000"/>
<rect x="1432.23" y="499.02" width="4.60" height="24.07" fill="#ff0000"/>
<rect x="1441.12" y="513.67" width="1.60" height="14.48" fill="#ff0000"/>
<rect x="1439.62" y="521.75" width="4.60" height="1.50" fill="#ff0000"/>
<rect x="1448.52" y="511.14" width="1.60" height="18.69" fill="#2fc435"/>
<rect x="1447.02" y="516.36" width="4.60" height="6.73" fill="#2fc435"/>
<rect x="1455.91" y="516.36" width="1.60" height="31.99" fill="#ff0000"/>
<rect x="1454.41" y="516.36" width="4.60" height="28.11" fill="#ff0000"/>
<rect x="1463.30" y="523.10" width="1.60" height="29.46" fill="#2fc435"/>
<rect x="1461.80" y="527.14" width="4.60" height="17.34" fill="#2fc435"/>
<rect x="1470.69" y="519.23" width="1.60" height="22.39" fill="#ff0000"/>
<rect x="1469.19" y="527.14" width="4.60" height="13.13" fill="#ff0000"/>
<rect x="1478.09" y="536.06" width="1.60" height="19.87" fill="#ff0000"/>
<rect x="1476.59" y="538.92" width="4.60" height="11.95" fill="#ff0000"/>
<rect x="1485.48" y="544.48" width="1.60" height="33.33" fill="#ff0000"/>
<rect x="1483.98" y="549.87" width="4.60" height="25.25" fill="#ff0000"/>
<rect x="1492.87" y="558.79" width="1.60" height="21.55" fill="#ff0000"/>
<rect x="1491.37" y="573.43" width="4.60" height="1.50" fill="#ff0000"/>
<rect x="1500.27" y="548.35" width="1.60" height="27.78" fill="#2fc435"/>
<rect x="1498.77" y="556.26" width="4.60" height="18.86" fill="#2fc435"/>
<rect x="1507.66" y="555.08" width="1.60" height="20.03" fill="#ff0000"/>
<rect x="1506.16" y="556.26" width="4.60" height="18.86" fill="#ff0000"/>
<rect x="1515.05" y="544.48" width="1.60" height="30.64" fill="#2fc435"/>
<rect x="1513.55" y="549.87" width="4.60" height="25.25" fill="#2fc435"/>
<rect x="1522.44" y="543.13" width="1.60" height="14.48" fill="#ff0000"/>
<rect x="1520.94" y="549.87" width="4.60" height="3.87" fill="#ff0000"/>
<rect x="1529.84" y="549.76" width="1.60" height="34.18" fill="#ff0000"/>
<rect x="1528.34" y="552.46" width="4.60" height="26.43" fill="#ff0000"/>
<rect x="1537.23" y="573.50" width="1.60" height="42.42" fill="#ff0000"/>
<rect x="1535.73" y="577.71" width="4.60" height="16.84" fill="#ff0000"/>
<rect x="1544.62" y="580.07" width="1.60" height="30.47" fill="#ff0000"/>
<rect x="1543.12" y="592.86" width="4.60" height="10.77" fill="#ff0000"/>
<rect x="1552.01" y="575.02" width="1.60" height="35.52" fill="#2fc435"/>
<rect x="1550.51" y="582.76" width="4.60" height="20.88" fill="#2fc435"/>
<rect x="1559.41" y="572.15" width="1.60" height="27.78" fill="#ff0000"/>
<rect x="1557.91" y="582.26" width="4.60" height="1.68" fill="#ff0000"/>
<rect x="1566.80" y="555.82" width="1.60" height="28.11" fill="#2fc435"/>
<rect x="1565.30" y="569.63" width="4.60" height="14.31" fill="#2fc435"/>
<rect x="1574.19" y="562.56" width="1.60" height="15.49" fill="#ff0000"/>
<rect x="1572.69" y="569.29" width="4.60" height="1.68" fill="#ff0000"/>
<rect x="1581.58" y="555.82" width="1.60" height="15.15" fill="#2fc435"/>
<rect x="1580.08" y="562.90" width="4.60" height="8.08" fill="#2fc435"/>
<rect x="1588.98" y="553.64" width="1.60" height="17.34" fill="#ff0000"/>
<rect x="1587.48" y="562.90" width="4.60" height="4.21" fill="#ff0000"/>
<rect x="1596.37" y="552.46" width="1.60" height="28.96" fill="#ff0000"/>
<rect x="1594.87" y="565.42" width="4.60" height="1.50" fill="#ff0000"/>
<rect x="1603.76" y="538.82" width="1.60" height="29.12" fill="#2fc435"/>
<rect x="1602.26" y="544.04" width="4.60" height="23.06" fill="#2fc435"/>
<rect x="1611.16" y="522.83" width="1.60" height="26.94" fill="#2fc435"/>
<rect x="1609.66" y="530.91" width="4.60" height="14.81" fill="#2fc435"/>
<rect x="1618.55" y="518.79" width="1.60" height="23.06" fill="#ff0000"/>
<rect x="1617.05" y="530.91" width="4.60" height="7.07" fill="#ff0000"/>
<rect x="1625.94" y="535.96" width="1.60" height="21.55" fill="#ff0000"/>
<rect x="1624.44" y="535.96" width="4.60" height="13.80" fill="#ff0000"/>
<rect x="1633.33" y="525.86" width="1.60" height="23.91" fill="#2fc435"/>
<rect x="1631.83" y="526.70" width="4.60" height="23.06" fill="#2fc435"/>
<rect x="1640.73" y="526.70" width="1.60" height="16.33" fill="#ff0000"/>
<rect x="1639.23" y="527.04" width="4.60" height="3.37" fill="#ff0000"/>
<rect x="1648.12" y="513.57" width="1.60" height="19.02" fill="#2fc435"/>
<rect x="1646.62" y="516.09" width="4.60" height="15.32" fill="#2fc435"/>
<rect x="1655.51" y="507.85" width="1.60" height="21.89" fill="#2fc435"/>
<rect x="1654.01" y="509.87" width="4.60" height="7.91" fill="#2fc435"/>
<rect x="1662.90" y="507.00" width="1.60" height="20.03" fill="#ff0000"/>
<rect x="1661.40" y="509.87" width="4.60" height="16.33" fill="#ff0000"/>
<rect x="1670.30" y="516.09" width="1.60" height="21.89" fill="#ff0000"/>
<rect x="1668.80" y="524.68" width="4.60" height="5.05" fill="#ff0000"/>
<rect x="1677.69" y="491.01" width="1.60" height="34.85" fill="#2fc435"/>
<rect x="1676.19" y="507.00" width="4.60" height="17.68" fill="#2fc435"/>
<rect x="1685.08" y="505.66" width="1.60" height="26.60" fill="#ff0000"/>
<rect x="1683.58" y="505.66" width="4.60" height="24.07" fill="#ff0000"/>
<rect x="1692.48" y="524.68" width="1.60" height="11.28" fill="#ff0000"/>
<rect x="1690.98" y="527.88" width="4.60" height="5.56" fill="#ff0000"/>
<rect x="1699.87" y="532.26" width="1.60" height="21.38" fill="#ff0000"/>
<rect x="1698.37" y="532.26" width="4.60" height="12.12" fill="#ff0000"/>
<rect x="1707.26" y="536.30" width="1.60" height="16.16" fill="#2fc435"/>
<rect x="1705.76" y="543.03" width="4.60" height="1.50" fill="#2fc435"/>
<rect x="1714.65" y="543.03" width="1.60" height="2.69" fill="#2fc435"/>
<rect x="1713.15" y="543.03" width="4.60" height="1.68" fill="#2fc435"/>
<rect x="1722.05" y="552.46" width="1.60" height="18.52" fill="#ff0000"/>
<rect x="1720.55" y="557.51" width="4.60" height="7.91" fill="#ff0000"/>
<rect x="1729.44" y="553.64" width="1.60" height="14.65" fill="#2fc435"/>
<rect x="1727.94" y="561.21" width="4.60" height="4.21" fill="#2fc435"/>
<rect x="1736.83" y="561.21" width="1.60" height="17.68" fill="#ff0000"/>
<rect x="1735.33" y="561.21" width="4.60" height="8.42" fill="#ff0000"/>
<rect x="1744.22" y="549.76" width="1.60" height="23.74" fill="#2fc435"/>
<rect x="1742.72" y="555.82" width="4.60" height="15.15" fill="#2fc435"/>
<rect x="1751.62" y="533.10" width="1.60" height="29.80" fill="#2fc435"/>
<rect x="1750.12" y="548.25" width="4.60" height="9.26" fill="#2fc435"/>
<rect x="1759.01" y="543.03" width="1.60" height="18.18" fill="#2fc435"/>
<rect x="1757.51" y="543.03" width="4.60" height="6.73" fill="#2fc435"/>
<rect x="1766.40" y="521.65" width="1.60" height="25.25" fill="#2fc435"/>
<rect x="1764.90" y="526.70" width="4.60" height="17.68" fill="#2fc435"/>
<rect x="1773.79" y="521.62" width="1.60" height="8.48" fill="#ff0000"/>
<rect x="1772.29" y="525.05" width="4.60" height="3.43" fill="#ff0000"/>
<rect x="1781.19" y="496.77" width="1.60" height="35.35" fill="#2fc435"/>
<rect x="1779.69" y="499.39" width="4.60" height="25.05" fill="#2fc435"/>
<rect x="1788.58" y="475.15" width="1.60" height="30.30" fill="#2fc435"/>
<rect x="1787.08" y="482.22" width="4.60" height="17.17" fill="#2fc435"/>
<rect x="1795.97" y="470.10" width="1.60" height="20.61" fill="#ff0000"/>
<rect x="1794.47" y="481.62" width="4.60" height="2.63" fill="#ff0000"/>
<rect x="1803.37" y="423.43" width="1.60" height="61.21" fill="#2fc435"/>
<rect x="1801.87" y="425.05" width="4.60" height="59.60" fill="#2fc435"/>
<rect x="1810.76" y="375.96" width="1.60" height="49.49" fill="#2fc435"/>
<rect x="1809.26" y="417.37" width="4.60" height="8.08" fill="#2fc435"/>
<rect x="1818.15" y="357.37" width="1.60" height="63.03" fill="#2fc435"/>
<rect x="1816.65" y="357.37" width="4.60" height="58.59" fill="#2fc435"/>
<rect x="1825.54" y="309.49" width="1.60" height="48.89" fill="#2fc435"/>
<rect x="1824.04" y="325.25" width="4.60" height="33.13" fill="#2fc435"/>
<rect x="1832.94" y="244.04" width="1.60" height="71.11" fill="#2fc435"/>
<rect x="1831.44" y="266.67" width="4.60" height="26.26" fill="#2fc435"/>
<rect x="1840.33" y="261.21" width="1.60" height="46.87" fill="#2fc435"/>
<rect x="1838.83" y="266.06" width="4.60" height="2.02" fill="#2fc435"/>
<rect x="1847.72" y="158.18" width="1.60" height="113.54" fill="#2fc435"/>
<rect x="1846.22" y="181.82" width="4.60" height="89.90" fill="#2fc435"/>
<rect x="1855.11" y="152.93" width="1.60" height="95.56" fill="#ff0000"/>
<rect x="1853.61" y="181.82" width="4.60" height="22.22" fill="#ff0000"/>
<rect x="1862.51" y="150.10" width="1.60" height="88.69" fill="#2fc435"/>
<rect x="1861.01" y="151.52" width="4.60" height="52.53" fill="#2fc435"/>
<rect x="1869.90" y="118.59" width="1.60" height="59.19" fill="#2fc435"/>
<rect x="1868.40" y="128.89" width="4.60" height="23.64" fill="#2fc435"/>
<!--/CANDLES-->
<defs><linearGradient id="rg" x1="0" y1="0" x2="0" y2="1"><stop offset="0" stop-color="#6e2626"/><stop offset="1" stop-color="#8c5a5a"/></linearGradient><clipPath id="c70"><rect x="0" y="800" width="1904" height="66.31"/></clipPath><clipPath id="c30"><rect x="0" y="928.69" width="1904" height="64.31"/></clipPath></defs>
<polygon points="2.0,901.5 7.7,900.5 15.1,915.0 22.5,918.1 29.9,917.4 37.3,923.2 44.7,914.7 52.1,917.6 59.5,902.1 66.9,905.2 74.3,910.3 81.7,912.6 89.1,903.0 96.5,891.4 103.8,882.1 111.2,892.0 118.6,894.6 126.0,898.7 133.4,906.6 140.8,897.9 148.2,900.5 155.6,881.8 163.0,890.3 170.4,899.6 177.8,892.6 185.2,893.0 192.6,892.6 200.0,888.3 207.3,898.2 214.7,899.0 222.1,905.0 229.5,912.5 236.9,910.6 244.3,914.6 251.7,917.6 259.1,924.8 266.5,919.5 273.9,922.4 281.3,922.8 288.7,925.7 296.1,917.6 303.4,920.9 310.8,912.2 318.2,900.6 325.6,906.0 333.0,908.4 340.4,904.6 347.8,905.6 355.2,912.9 362.6,912.9 370.0,911.9 377.4,900.3 384.8,891.1 392.2,885.6 399.6,895.3 406.9,900.5 414.3,901.2 421.7,904.2 429.1,913.8 436.5,914.7 443.9,916.2 451.3,907.6 458.7,910.4 466.1,911.0 473.5,921.5 480.9,934.0 488.3,928.3 495.7,929.6 503.1,935.3 510.4,921.0 517.8,901.5 525.2,895.3 532.6,901.3 540.0,898.0 547.4,905.4 554.8,910.6 562.2,907.7 569.6,909.5 577.0,908.3 584.4,891.3 591.8,894.4 599.2,899.8 606.5,903.9 613.9,903.2 621.3,903.2 628.7,896.8 636.1,894.7 643.5,884.2 650.9,891.6 658.3,888.6 665.7,882.4 673.1,876.1 680.5,878.0 687.9,881.7 695.3,877.0 702.7,883.6 710.0,890.8 717.4,887.6 724.8,888.2 732.2,903.2 739.6,892.4 747.0,898.5 754.4,895.3 761.8,887.7 769.2,876.1 776.6,877.3 784.0,882.5 791.4,890.1 798.8,888.7 806.2,896.3 813.5,894.7 820.9,886.8 828.3,898.2 835.7,898.7 843.1,892.8 850.5,898.9 857.9,896.1 865.3,896.1 872.7,896.1 880.1,883.6 887.5,892.3 894.9,892.3 902.3,892.7 909.6,890.8 917.0,887.5 924.4,877.8 931.8,881.2 939.2,895.3 946.6,901.2 954.0,910.6 961.4,909.9 968.8,906.2 976.2,910.6 983.6,899.2 991.0,888.0 998.4,878.7 1005.8,876.6 1013.1,869.2 1020.1,866.3 1020.1,866.3 1013.1,866.3 1005.8,866.3 998.4,866.3 991.0,866.3 983.6,866.3 976.2,866.3 968.8,866.3 961.4,866.3 954.0,866.3 946.6,866.3 939.2,866.3 931.8,866.3 924.4,866.3 917.0,866.3 909.6,866.3 902.3,866.3 894.9,866.3 887.5,866.3 880.1,866.3 872.7,866.3 865.3,866.3 857.9,866.3 850.5,866.3 843.1,866.3 835.7,866.3 828.3,866.3 820.9,866.3 813.5,866.3 806.2,866.3 798.8,866.3 791.4,866.3 784.0,866.3 776.6,866.3 769.2,866.3 761.8,866.3 754.4,866.3 747.0,866.3 739.6,866.3 732.2,866.3 724.8,866.3 717.4,866.3 710.0,866.3 702.7,866.3 695.3,866.3 687.9,866.3 680.5,866.3 673.1,866.3 665.7,866.3 658.3,866.3 650.9,866.3 643.5,866.3 636.1,866.3 628.7,866.3 621.3,866.3 613.9,866.3 606.5,866.3 599.2,866.3 591.8,866.3 584.4,866.3 577.0,866.3 569.6,866.3 562.2,866.3 554.8,866.3 547.4,866.3 540.0,866.3 532.6,866.3 525.2,866.3 517.8,866.3 510.4,866.3 503.1,866.3 495.7,866.3 488.3,866.3 480.9,866.3 473.5,866.3 466.1,866.3 458.7,866.3 451.3,866.3 443.9,866.3 436.5,866.3 429.1,866.3 421.7,866.3 414.3,866.3 406.9,866.3 399.6,866.3 392.2,866.3 384.8,866.3 377.4,866.3 370.0,866.3 362.6,866.3 355.2,866.3 347.8,866.3 340.4,866.3 333.0,866.3 325.6,866.3 318.2,866.3 310.8,866.3 303.4,866.3 296.1,866.3 288.7,866.3 281.3,866.3 273.9,866.3 266.5,866.3 259.1,866.3 251.7,866.3 244.3,866.3 236.9,866.3 229.5,866.3 222.1,866.3 214.7,866.3 207.3,866.3 200.0,866.3 192.6,866.3 185.2,866.3 177.8,866.3 170.4,866.3 163.0,866.3 155.6,866.3 148.2,866.3 140.8,866.3 133.4,866.3 126.0,866.3 118.6,866.3 111.2,866.3 103.8,866.3 96.5,866.3 89.1,866.3 81.7,866.3 74.3,866.3 66.9,866.3 59.5,866.3 52.1,866.3 44.7,866.3 37.3,866.3 29.9,866.3 22.5,866.3 15.1,866.3 7.7,866.3 2.0,866.3" fill="none"/>
<polygon points="1020.1,866.3 1020.5,866.1 1020.8,866.3 1020.8,866.3 1020.5,866.3 1020.1,866.3" fill="url(#rg)"/>
<polygon points="1020.8,866.3 1027.9,871.6 1035.3,871.3 1039.8,866.3 1039.8,866.3 1035.3,866.3 1027.9,866.3 1020.8,866.3" fill="none"/>
<polygon points="1039.8,866.3 1042.7,863.0 1050.1,859.1 1057.5,857.3 1064.9,863.5 1067.8,866.3 1067.8,866.3 1064.9,866.3 1057.5,866.3 1050.1,866.3 1042.7,866.3 1039.8,866.3" fill="url(#rg)"/>
<polygon points="1067.8,866.3 1072.3,870.7 1078.0,866.3 1078.0,866.3 1072.3,866.3 1067.8,866.3" fill="none"/>
<polygon points="1078.0,866.3 1079.7,865.0 1087.1,858.1 1094.5,856.4 1101.9,857.0 1109.3,857.2 1116.6,853.4 1124.0,850.4 1131.4,849.2 1137.5,866.3 1137.5,866.3 1131.4,866.3 1124.0,866.3 1116.6,866.3 1109.3,866.3 1101.9,866.3 1094.5,866.3 1087.1,866.3 1079.7,866.3 1078.0,866.3" fill="url(#rg)"/>
<polygon points="1137.5,866.3 1138.8,869.9 1146.2,870.6 1153.6,881.9 1161.0,891.7 1168.4,885.6 1175.8,886.8 1183.2,896.9 1190.6,902.9 1198.0,909.0 1205.4,898.5 1212.7,899.9 1220.1,899.9 1227.5,895.9 1234.9,901.1 1242.3,901.1 1249.7,905.2 1257.1,911.7 1264.5,904.5 1271.9,910.0 1279.3,908.4 1286.7,910.7 1294.1,891.1 1301.5,896.0 1308.9,904.3 1316.2,901.8 1323.6,901.8 1331.0,902.5 1338.4,912.6 1345.8,915.2 1353.2,915.7 1360.6,912.4 1368.0,904.1 1375.4,898.2 1382.8,908.3 1390.2,913.1 1397.6,914.4 1405.0,915.8 1412.4,899.5 1419.7,883.3 1427.1,894.5 1434.5,903.4 1441.9,903.4 1449.3,900.3 1456.7,910.9 1464.1,903.1 1471.5,907.8 1478.9,911.4 1486.3,918.9 1493.7,918.8 1501.1,909.4 1508.5,915.6 1515.9,904.1 1523.2,905.5 1530.6,913.8 1538.0,918.3 1545.4,920.9 1552.8,910.8 1560.2,911.2 1567.6,904.6 1575.0,905.1 1582.4,901.2 1589.8,903.0 1597.2,902.8 1604.6,891.7 1612.0,886.1 1619.3,889.9 1626.7,896.0 1634.1,885.9 1641.5,887.9 1648.9,882.1 1656.3,879.7 1663.7,888.9 1671.1,890.8 1678.5,881.3 1685.9,893.1 1693.3,894.8 1700.7,900.0 1708.1,899.3 1715.5,899.3 1722.8,909.9 1730.2,907.4 1737.6,911.2 1745.0,902.9 1752.4,898.7 1759.8,895.8 1767.2,887.5 1774.6,888.6 1782.0,875.9 1789.4,870.0 1796.8,871.3 1799.2,866.3 1799.2,866.3 1796.8,866.3 1789.4,866.3 1782.0,866.3 1774.6,866.3 1767.2,866.3 1759.8,866.3 1752.4,866.3 1745.0,866.3 1737.6,866.3 1730.2,866.3 1722.8,866.3 1715.5,866.3 1708.1,866.3 1700.7,866.3 1693.3,866.3 1685.9,866.3 1678.5,866.3 1671.1,866.3 1663.7,866.3 1656.3,866.3 1648.9,866.3 1641.5,866.3 1634.1,866.3 1626.7,866.3 1619.3,866.3 1612.0,866.3 1604.6,866.3 1597.2,866.3 1589.8,866.3 1582.4,866.3 1575.0,866.3 1567.6,866.3 1560.2,866.3 1552.8,866.3 1545.4,866.3 1538.0,866.3 1530.6,866.3 1523.2,866.3 1515.9,866.3 1508.5,866.3 1501.1,866.3 1493.7,866.3 1486.3,866.3 1478.9,866.3 1471.5,866.3 1464.1,866.3 1456.7,866.3 1449.3,866.3 1441.9,866.3 1434.5,866.3 1427.1,866.3 1419.7,866.3 1412.4,866.3 1405.0,866.3 1397.6,866.3 1390.2,866.3 1382.8,866.3 1375.4,866.3 1368.0,866.3 1360.6,866.3 1353.2,866.3 1345.8,866.3 1338.4,866.3 1331.0,866.3 1323.6,866.3 1316.2,866.3 1308.9,866.3 1301.5,866.3 1294.1,866.3 1286.7,866.3 1279.3,866.3 1271.9,866.3 1264.5,866.3 1257.1,866.3 1249.7,866.3 1242.3,866.3 1234.9,866.3 1227.5,866.3 1220.1,866.3 1212.7,866.3 1205.4,866.3 1198.0,866.3 1190.6,866.3 1183.2,866.3 1175.8,866.3 1168.4,866.3 1161.0,866.3 1153.6,866.3 1146.2,866.3 1138.8,866.3 1137.5,866.3" fill="none"/>
<polygon points="1799.2,866.3 1804.2,856.0 1811.6,854.6 1819.0,845.6 1826.3,842.2 1833.7,837.5 1841.1,837.5 1848.5,832.8 1855.9,842.1 1863.3,838.7 1870.7,837.5 1870.7,866.3 1863.3,866.3 1855.9,866.3 1848.5,866.3 1841.1,866.3 1833.7,866.3 1826.3,866.3 1819.0,866.3 1811.6,866.3 1804.2,866.3 1799.2,866.3" fill="url(#rg)"/>
<polygon points="2.0,928.7 2.0,901.5 7.7,900.5 15.1,915.0 22.5,918.1 29.9,917.4 37.3,923.2 44.7,914.7 52.1,917.6 59.5,902.1 66.9,905.2 74.3,910.3 81.7,912.6 89.1,903.0 96.5,891.4 103.8,882.1 111.2,892.0 118.6,894.6 126.0,898.7 133.4,906.6 140.8,897.9 148.2,900.5 155.6,881.8 163.0,890.3 170.4,899.6 177.8,892.6 185.2,893.0 192.6,892.6 200.0,888.3 207.3,898.2 214.7,899.0 222.1,905.0 229.5,912.5 236.9,910.6 244.3,914.6 251.7,917.6 259.1,924.8 266.5,919.5 273.9,922.4 281.3,922.8 288.7,925.7 296.1,917.6 303.4,920.9 310.8,912.2 318.2,900.6 325.6,906.0 333.0,908.4 340.4,904.6 347.8,905.6 355.2,912.9 362.6,912.9 370.0,911.9 377.4,900.3 384.8,891.1 392.2,885.6 399.6,895.3 406.9,900.5 414.3,901.2 421.7,904.2 429.1,913.8 436.5,914.7 443.9,916.2 451.3,907.6 458.7,910.4 466.1,911.0 473.5,921.5 480.9,934.0 488.3,928.3 495.7,929.6 503.1,935.3 510.4,921.0 517.8,901.5 525.2,895.3 532.6,901.3 540.0,898.0 547.4,905.4 554.8,910.6 562.2,907.7 569.6,909.5 577.0,908.3 584.4,891.3 591.8,894.4 599.2,899.8 606.5,903.9 613.9,903.2 621.3,903.2 628.7,896.8 636.1,894.7 643.5,884.2 650.9,891.6 658.3,888.6 665.7,882.4 673.1,876.1 680.5,878.0 687.9,881.7 695.3,877.0 702.7,883.6 710.0,890.8 717.4,887.6 724.8,888.2 732.2,903.2 739.6,892.4 747.0,898.5 754.4,895.3 761.8,887.7 769.2,876.1 776.6,877.3 784.0,882.5 791.4,890.1 798.8,888.7 806.2,896.3 813.5,894.7 820.9,886.8 828.3,898.2 835.7,898.7 843.1,892.8 850.5,898.9 857.9,896.1 865.3,896.1 872.7,896.1 880.1,883.6 887.5,892.3 894.9,892.3 902.3,892.7 909.6,890.8 917.0,887.5 924.4,877.8 931.8,881.2 939.2,895.3 946.6,901.2 954.0,910.6 961.4,909.9 968.8,906.2 976.2,910.6 983.6,899.2 991.0,888.0 998.4,878.7 1005.8,876.6 1013.1,869.2 1020.5,866.1 1027.9,871.6 1035.3,871.3 1042.7,863.0 1050.1,859.1 1057.5,857.3 1064.9,863.5 1072.3,870.7 1079.7,865.0 1087.1,858.1 1094.5,856.4 1101.9,857.0 1109.3,857.2 1116.6,853.4 1124.0,850.4 1131.4,849.2 1138.8,869.9 1146.2,870.6 1153.6,881.9 1161.0,891.7 1168.4,885.6 1175.8,886.8 1183.2,896.9 1190.6,902.9 1198.0,909.0 1205.4,898.5 1212.7,899.9 1220.1,899.9 1227.5,895.9 1234.9,901.1 1242.3,901.1 1249.7,905.2 1257.1,911.7 1264.5,904.5 1271.9,910.0 1279.3,908.4 1286.7,910.7 1294.1,891.1 1301.5,896.0 1308.9,904.3 1316.2,901.8 1323.6,901.8 1331.0,902.5 1338.4,912.6 1345.8,915.2 1353.2,915.7 1360.6,912.4 1368.0,904.1 1375.4,898.2 1382.8,908.3 1390.2,913.1 1397.6,914.4 1405.0,915.8 1412.4,899.5 1419.7,883.3 1427.1,894.5 1434.5,903.4 1441.9,903.4 1449.3,900.3 1456.7,910.9 1464.1,903.1 1471.5,907.8 1478.9,911.4 1486.3,918.9 1493.7,918.8 1501.1,909.4 1508.5,915.6 1515.9,904.1 1523.2,905.5 1530.6,913.8 1538.0,918.3 1545.4,920.9 1552.8,910.8 1560.2,911.2 1567.6,904.6 1575.0,905.1 1582.4,901.2 1589.8,903.0 1597.2,902.8 1604.6,891.7 1612.0,886.1 1619.3,889.9 1626.7,896.0 1634.1,885.9 1641.5,887.9 1648.9,882.1 1656.3,879.7 1663.7,888.9 1671.1,890.8 1678.5,881.3 1685.9,893.1 1693.3,894.8 1700.7,900.0 1708.1,899.3 1715.5,899.3 1722.8,909.9 1730.2,907.4 1737.6,911.2 1745.0,902.9 1752.4,898.7 1759.8,895.8 1767.2,887.5 1774.6,888.6 1782.0,875.9 1789.4,870.0 1796.8,871.3 1804.2,856.0 1811.6,854.6 1819.0,845.6 1826.3,842.2 1833.7,837.5 1841.1,837.5 1848.5,832.8 1855.9,842.1 1863.3,838.7 1870.7,837.5 1870.7,928.7" fill="#3a7a3a" clip-path="url(#c30)"/>
<line x1="2.00" y1="866.10" x2="1904.00" y2="866.10" stroke="#ee0000" stroke-width="1.8"/>
<line x1="2.00" y1="928.60" x2="1904.00" y2="928.60" stroke="#00cc00" stroke-width="1.8"/>
<polyline points="2.0,901.5 7.7,900.5 15.1,915.0 22.5,918.1 29.9,917.4 37.3,923.2 44.7,914.7 52.1,917.6 59.5,902.1 66.9,905.2 74.3,910.3 81.7,912.6 89.1,903.0 96.5,891.4 103.8,882.1 111.2,892.0 118.6,894.6 126.0,898.7 133.4,906.6 140.8,897.9 148.2,900.5 155.6,881.8 163.0,890.3 170.4,899.6 177.8,892.6 185.2,893.0 192.6,892.6 200.0,888.3 207.3,898.2 214.7,899.0 222.1,905.0 229.5,912.5 236.9,910.6 244.3,914.6 251.7,917.6 259.1,924.8 266.5,919.5 273.9,922.4 281.3,922.8 288.7,925.7 296.1,917.6 303.4,920.9 310.8,912.2 318.2,900.6 325.6,906.0 333.0,908.4 340.4,904.6 347.8,905.6 355.2,912.9 362.6,912.9 370.0,911.9 377.4,900.3 384.8,891.1 392.2,885.6 399.6,895.3 406.9,900.5 414.3,901.2 421.7,904.2 429.1,913.8 436.5,914.7 443.9,916.2 451.3,907.6 458.7,910.4 466.1,911.0 473.5,921.5 480.9,934.0 488.3,928.3 495.7,929.6 503.1,935.3 510.4,921.0 517.8,901.5 525.2,895.3 532.6,901.3 540.0,898.0 547.4,905.4 554.8,910.6 562.2,907.7 569.6,909.5 577.0,908.3 584.4,891.3 591.8,894.4 599.2,899.8 606.5,903.9 613.9,903.2 621.3,903.2 628.7,896.8 636.1,894.7 643.5,884.2 650.9,891.6 658.3,888.6 665.7,882.4 673.1,876.1 680.5,878.0 687.9,881.7 695.3,877.0 702.7,883.6 710.0,890.8 717.4,887.6 724.8,888.2 732.2,903.2 739.6,892.4 747.0,898.5 754.4,895.3 761.8,887.7 769.2,876.1 776.6,877.3 784.0,882.5 791.4,890.1 798.8,888.7 806.2,896.3 813.5,894.7 820.9,886.8 828.3,898.2 835.7,898.7 843.1,892.8 850.5,898.9 857.9,896.1 865.3,896.1 872.7,896.1 880.1,883.6 887.5,892.3 894.9,892.3 902.3,892.7 909.6,890.8 917.0,887.5 924.4,877.8 931.8,881.2 939.2,895.3 946.6,901.2 954.0,910.6 961.4,909.9 968.8,906.2 976.2,910.6 983.6,899.2 991.0,888.0 998.4,878.7 1005.8,876.6 1013.1,869.2 1020.5,866.1 1027.9,871.6 1035.3,871.3 1042.7,863.0 1050.1,859.1 1057.5,857.3 1064.9,863.5 1072.3,870.7 1079.7,865.0 1087.1,858.1 1094.5,856.4 1101.9,857.0 1109.3,857.2 1116.6,853.4 1124.0,850.4 1131.4,849.2 1138.8,869.9 1146.2,870.6 1153.6,881.9 1161.0,891.7 1168.4,885.6 1175.8,886.8 1183.2,896.9 1190.6,902.9 1198.0,909.0 1205.4,898.5 1212.7,899.9 1220.1,899.9 1227.5,895.9 1234.9,901.1 1242.3,901.1 1249.7,905.2 1257.1,911.7 1264.5,904.5 1271.9,910.0 1279.3,908.4 1286.7,910.7 1294.1,891.1 1301.5,896.0 1308.9,904.3 1316.2,901.8 1323.6,901.8 1331.0,902.5 1338.4,912.6 1345.8,915.2 1353.2,915.7 1360.6,912.4 1368.0,904.1 1375.4,898.2 1382.8,908.3 1390.2,913.1 1397.6,914.4 1405.0,915.8 1412.4,899.5 1419.7,883.3 1427.1,894.5 1434.5,903.4 1441.9,903.4 1449.3,900.3 1456.7,910.9 1464.1,903.1 1471.5,907.8 1478.9,911.4 1486.3,918.9 1493.7,918.8 1501.1,909.4 1508.5,915.6 1515.9,904.1 1523.2,905.5 1530.6,913.8 1538.0,918.3 1545.4,920.9 1552.8,910.8 1560.2,911.2 1567.6,904.6 1575.0,905.1 1582.4,901.2 1589.8,903.0 1597.2,902.8 1604.6,891.7 1612.0,886.1 1619.3,889.9 1626.7,896.0 1634.1,885.9 1641.5,887.9 1648.9,882.1 1656.3,879.7 1663.7,888.9 1671.1,890.8 1678.5,881.3 1685.9,893.1 1693.3,894.8 1700.7,900.0 1708.1,899.3 1715.5,899.3 1722.8,909.9 1730.2,907.4 1737.6,911.2 1745.0,902.9 1752.4,898.7 1759.8,895.8 1767.2,887.5 1774.6,888.6 1782.0,875.9 1789.4,870.0 1796.8,871.3 1804.2,856.0 1811.6,854.6 1819.0,845.6 1826.3,842.2 1833.7,837.5 1841.1,837.5 1848.5,832.8 1855.9,842.1 1863.3,838.7 1870.7,837.5" fill="none" stroke="#dedede" stroke-width="1.45" stroke-linejoin="round"/>
<defs><linearGradient id="gp" x1="0" y1="0" x2="0" y2="1"><stop offset="0" stop-color="#0cf50c"/><stop offset="1" stop-color="#008800"/></linearGradient><linearGradient id="gn" x1="0" y1="0" x2="0" y2="1"><stop offset="0" stop-color="#008800"/><stop offset="1" stop-color="#0cf50c"/></linearGradient></defs>
<polygon points="7.7,1107.9 15.1,1109.8 19.8,1111.2 19.8,1111.2 15.1,1111.1 7.7,1111.4" fill="#838383"/>
<polygon points="19.8,1111.2 22.5,1112.0 29.9,1113.5 37.3,1115.8 44.7,1116.4 52.1,1117.3 59.5,1115.8 66.9,1115.1 74.3,1115.3 81.7,1115.7 87.5,1114.9 87.5,1114.9 81.7,1114.9 74.3,1114.7 66.9,1114.6 59.5,1114.5 52.1,1114.1 44.7,1113.3 37.3,1112.5 29.9,1111.7 22.5,1111.3 19.8,1111.2" fill="#7f3232"/>
<polygon points="87.5,1114.9 89.1,1114.6 96.5,1111.8 103.8,1107.6 111.2,1105.8 118.6,1104.9 126.0,1104.9 133.4,1106.4 140.8,1106.0 148.2,1106.2 155.6,1102.3 163.0,1100.9 170.4,1101.8 177.8,1101.0 185.2,1100.4 192.6,1099.9 200.0,1098.7 207.3,1099.6 214.7,1100.6 217.3,1101.3 217.3,1101.3 214.7,1101.2 207.3,1101.4 200.0,1101.8 192.6,1102.6 185.2,1103.3 177.8,1104.0 170.4,1104.7 163.0,1105.5 155.6,1106.6 148.2,1107.7 140.8,1108.1 133.4,1108.6 126.0,1109.1 118.6,1110.2 111.2,1111.5 103.8,1112.9 96.5,1114.2 89.1,1114.9 87.5,1114.9" fill="#838383"/>
<polygon points="217.3,1101.3 222.1,1102.7 229.5,1106.1 236.9,1108.4 244.3,1111.1 251.7,1113.9 259.1,1118.0 266.5,1120.2 273.9,1122.6 281.3,1124.3 288.7,1126.2 296.1,1126.4 303.4,1127.0 310.8,1126.1 318.2,1123.2 323.6,1122.2 323.6,1122.2 318.2,1122.3 310.8,1122.1 303.4,1121.0 296.1,1119.5 288.7,1117.8 281.3,1115.7 273.9,1113.6 266.5,1111.3 259.1,1109.1 251.7,1106.9 244.3,1105.1 236.9,1103.6 229.5,1102.4 222.1,1101.5 217.3,1101.3" fill="#7f3232"/>
<polygon points="323.6,1122.2 325.6,1121.8 333.0,1121.0 340.4,1119.6 347.8,1118.5 355.2,1118.9 362.6,1119.1 370.0,1118.9 377.4,1117.0 384.8,1113.8 392.2,1110.3 399.6,1108.9 406.9,1108.6 414.3,1108.5 421.7,1108.8 429.1,1110.8 433.6,1111.8 433.6,1111.8 429.1,1111.7 421.7,1112.0 414.3,1112.7 406.9,1113.8 399.6,1115.1 392.2,1116.7 384.8,1118.2 377.4,1119.3 370.0,1119.9 362.6,1120.2 355.2,1120.5 347.8,1120.9 340.4,1121.5 333.0,1122.0 325.6,1122.2 323.6,1122.2" fill="#838383"/>
<polygon points="433.6,1111.8 436.5,1112.5 443.9,1114.0 451.3,1114.0 458.7,1114.4 466.1,1114.6 473.5,1116.7 480.9,1121.6 488.3,1124.5 495.7,1126.9 503.1,1130.3 510.4,1130.8 517.8,1127.5 524.1,1124.0 524.1,1124.0 517.8,1124.2 510.4,1123.3 503.1,1121.4 495.7,1119.2 488.3,1117.3 480.9,1115.5 473.5,1114.0 466.1,1113.3 458.7,1113.0 451.3,1112.6 443.9,1112.3 436.5,1111.9 433.6,1111.8" fill="#7f3232"/>
<polygon points="524.1,1124.0 525.2,1123.4 532.6,1121.2 540.0,1118.6 547.4,1118.1 554.8,1118.8 562.2,1118.7 569.6,1118.9 577.0,1118.6 584.4,1114.9 591.8,1112.6 599.2,1111.7 606.5,1111.8 613.9,1111.7 621.3,1111.5 628.7,1110.2 636.1,1108.7 643.5,1105.5 650.9,1104.2 658.3,1102.5 665.7,1099.9 673.1,1096.5 680.5,1094.1 687.9,1092.9 695.3,1091.0 702.7,1090.7 710.0,1091.6 717.4,1091.8 724.8,1092.3 730.9,1094.7 730.9,1094.7 724.8,1094.6 717.4,1095.1 710.0,1095.9 702.7,1097.0 695.3,1098.6 687.9,1100.5 680.5,1102.5 673.1,1104.5 665.7,1106.6 658.3,1108.2 650.9,1109.7 643.5,1111.0 636.1,1112.4 628.7,1113.3 621.3,1114.1 613.9,1114.8 606.5,1115.5 599.2,1116.5 591.8,1117.6 584.4,1118.9 577.0,1119.9 569.6,1120.2 562.2,1120.6 554.8,1121.0 547.4,1121.6 540.0,1122.5 532.6,1123.4 525.2,1124.0 524.1,1124.0" fill="#838383"/>
<polygon points="730.9,1094.7 732.2,1095.2 739.6,1095.6 747.0,1097.1 754.4,1097.9 761.8,1097.0 764.2,1095.9 764.2,1095.9 761.8,1096.1 754.4,1095.8 747.0,1095.3 739.6,1094.9 732.2,1094.7 730.9,1094.7" fill="#7f3232"/>
<polygon points="764.2,1095.9 769.2,1093.6 776.6,1091.3 784.0,1090.4 791.4,1091.1 798.8,1091.5 804.9,1093.0 804.9,1093.0 798.8,1092.9 791.4,1093.3 784.0,1093.8 776.6,1094.7 769.2,1095.6 764.2,1095.9" fill="#838383"/>
<polygon points="804.9,1093.0 806.2,1093.3 813.5,1094.5 820.9,1094.1 828.3,1095.8 835.7,1097.4 843.1,1097.6 850.5,1098.9 857.9,1099.5 865.3,1100.0 872.7,1100.5 880.1,1098.7 887.5,1098.7 894.9,1098.7 902.3,1098.8 909.6,1098.7 913.3,1098.4 913.3,1098.4 909.6,1098.5 902.3,1098.4 894.9,1098.3 887.5,1098.2 880.1,1098.1 872.7,1098.0 865.3,1097.3 857.9,1096.7 850.5,1095.9 843.1,1095.2 835.7,1094.6 828.3,1093.9 820.9,1093.5 813.5,1093.3 806.2,1093.0 804.9,1093.0" fill="#7f3232"/>
<polygon points="913.3,1098.4 917.0,1098.2 924.4,1096.1 931.8,1095.0 939.2,1096.1 943.6,1097.2 943.6,1097.2 939.2,1097.1 931.8,1097.4 924.4,1098.0 917.0,1098.4 913.3,1098.4" fill="#838383"/>
<polygon points="943.6,1097.2 946.6,1098.0 954.0,1101.2 961.4,1103.7 968.8,1105.1 976.2,1107.0 983.6,1106.8 991.0,1104.8 994.8,1102.9 994.8,1102.9 991.0,1103.1 983.6,1102.7 976.2,1101.7 968.8,1100.4 961.4,1099.2 954.0,1098.1 946.6,1097.3 943.6,1097.2" fill="#7f3232"/>
<polygon points="994.8,1102.9 998.4,1101.2 1005.8,1097.9 1013.1,1093.5 1020.5,1089.3 1027.9,1086.9 1035.3,1085.1 1042.7,1081.6 1050.1,1077.8 1057.5,1074.4 1064.9,1072.9 1072.3,1072.9 1079.7,1071.7 1087.1,1068.8 1094.5,1066.2 1101.9,1064.6 1109.3,1063.9 1116.6,1062.4 1124.0,1060.5 1131.4,1059.0 1138.8,1060.8 1146.2,1062.8 1149.9,1064.6 1149.9,1064.6 1146.2,1064.4 1138.8,1064.8 1131.4,1065.8 1124.0,1067.6 1116.6,1069.3 1109.3,1071.1 1101.9,1072.9 1094.5,1074.9 1087.1,1077.1 1079.7,1079.2 1072.3,1081.1 1064.9,1083.1 1057.5,1085.7 1050.1,1088.5 1042.7,1091.2 1035.3,1093.6 1027.9,1095.7 1020.5,1098.0 1013.1,1100.1 1005.8,1101.8 998.4,1102.7 994.8,1102.9" fill="#838383"/>
<polygon points="1149.9,1064.6 1153.6,1066.4 1161.0,1071.3 1168.4,1074.2 1175.8,1077.0 1183.2,1081.2 1190.6,1086.0 1198.0,1091.2 1205.4,1093.5 1212.7,1095.7 1220.1,1097.6 1227.5,1098.4 1234.9,1100.0 1242.3,1101.3 1249.7,1103.1 1257.1,1105.6 1264.5,1106.6 1271.9,1108.4 1279.3,1109.5 1286.7,1110.7 1294.1,1108.6 1301.5,1107.6 1308.9,1108.4 1316.2,1108.5 1323.6,1108.5 1331.0,1108.6 1338.4,1110.4 1345.8,1112.3 1353.2,1113.7 1360.6,1114.3 1368.0,1113.7 1375.4,1112.3 1382.8,1112.7 1390.2,1113.8 1397.6,1114.7 1405.0,1115.6 1412.4,1114.1 1413.8,1113.3 1413.8,1113.3 1412.4,1113.4 1405.0,1113.2 1397.6,1112.7 1390.2,1112.1 1382.8,1111.7 1375.4,1111.5 1368.0,1111.3 1360.6,1110.7 1353.2,1109.8 1345.8,1108.8 1338.4,1108.0 1331.0,1107.4 1323.6,1107.0 1316.2,1106.7 1308.9,1106.2 1301.5,1105.7 1294.1,1105.2 1286.7,1104.3 1279.3,1102.7 1271.9,1101.0 1264.5,1099.2 1257.1,1097.3 1249.7,1095.2 1242.3,1093.3 1234.9,1091.3 1227.5,1089.1 1220.1,1086.7 1212.7,1084.0 1205.4,1081.1 1198.0,1078.0 1190.6,1074.7 1183.2,1071.9 1175.8,1069.6 1168.4,1067.7 1161.0,1066.1 1153.6,1064.8 1149.9,1064.6" fill="#7f3232"/>
<polygon points="1413.8,1113.3 1419.7,1110.0 1427.1,1108.5 1434.5,1109.0 1441.9,1109.3 1449.3,1109.0 1455.7,1110.6 1455.7,1110.6 1449.3,1110.5 1441.9,1110.9 1434.5,1111.3 1427.1,1111.9 1419.7,1112.7 1413.8,1113.3" fill="#838383"/>
<polygon points="1455.7,1110.6 1456.7,1110.8 1464.1,1110.9 1471.5,1111.8 1478.9,1113.2 1486.3,1116.1 1493.7,1118.1 1501.1,1118.2 1508.5,1119.5 1515.9,1118.4 1523.2,1117.7 1530.6,1118.9 1538.0,1120.8 1545.4,1122.8 1552.8,1122.6 1560.2,1122.3 1567.6,1120.8 1571.4,1120.1 1571.4,1120.1 1567.6,1120.2 1560.2,1120.0 1552.8,1119.5 1545.4,1118.7 1538.0,1117.6 1530.6,1116.9 1523.2,1116.4 1515.9,1116.0 1508.5,1115.4 1501.1,1114.4 1493.7,1113.5 1486.3,1112.3 1478.9,1111.3 1471.5,1110.9 1464.1,1110.7 1456.7,1110.6 1455.7,1110.6" fill="#7f3232"/>
<polygon points="1571.4,1120.1 1575.0,1119.5 1582.4,1117.7 1589.8,1116.5 1597.2,1115.3 1604.6,1112.6 1612.0,1109.3 1619.3,1107.3 1626.7,1106.5 1634.1,1104.2 1641.5,1102.6 1648.9,1100.3 1656.3,1098.1 1663.7,1097.6 1671.1,1097.6 1678.5,1095.9 1685.9,1096.4 1693.3,1097.2 1700.7,1098.7 1706.4,1099.5 1706.4,1099.5 1700.7,1099.5 1693.3,1099.7 1685.9,1100.3 1678.5,1101.3 1671.1,1102.7 1663.7,1103.9 1656.3,1105.5 1648.9,1107.4 1641.5,1109.1 1634.1,1110.8 1626.7,1112.4 1619.3,1113.9 1612.0,1115.5 1604.6,1117.1 1597.2,1118.2 1589.8,1118.9 1582.4,1119.6 1575.0,1120.0 1571.4,1120.1" fill="#838383"/>
<polygon points="1706.4,1099.5 1708.1,1099.8 1715.5,1100.7 1722.8,1103.2 1730.2,1104.8 1737.6,1106.6 1745.0,1107.1 1752.4,1106.8 1759.8,1106.1 1766.9,1104.4 1766.9,1104.4 1759.8,1104.4 1752.4,1104.0 1745.0,1103.3 1737.6,1102.4 1730.2,1101.3 1722.8,1100.5 1715.5,1099.8 1708.1,1099.6 1706.4,1099.5" fill="#7f3232"/>
<polygon points="1766.9,1104.4 1767.2,1104.3 1774.6,1103.1 1782.0,1099.9 1789.4,1096.2 1796.8,1093.5 1804.2,1087.1 1811.6,1081.7 1819.0,1073.2 1826.3,1064.5 1833.7,1053.7 1841.1,1045.8 1848.5,1034.0 1855.9,1027.1 1863.3,1018.7 1870.7,1011.4 1870.7,1041.8 1863.3,1049.4 1855.9,1057.1 1848.5,1064.5 1841.1,1072.2 1833.7,1078.8 1826.3,1085.0 1819.0,1090.2 1811.6,1094.4 1804.2,1097.6 1796.8,1100.2 1789.4,1101.9 1782.0,1103.3 1774.6,1104.1 1767.2,1104.4 1766.9,1104.4" fill="#838383"/>
<rect x="5.74" y="1100.28" width="4.00" height="3.52" fill="url(#gp)"/>
<rect x="13.13" y="1102.57" width="4.00" height="1.23" fill="url(#gp)"/>
<rect x="20.53" y="1103.80" width="4.00" height="1.20" fill="url(#gn)"/>
<rect x="27.92" y="1103.80" width="4.00" height="1.78" fill="url(#gn)"/>
<rect x="35.31" y="1103.80" width="4.00" height="3.25" fill="url(#gn)"/>
<rect x="42.70" y="1103.80" width="4.00" height="3.12" fill="url(#gn)"/>
<rect x="50.10" y="1103.80" width="4.00" height="3.24" fill="url(#gn)"/>
<rect x="57.49" y="1103.80" width="4.00" height="1.39" fill="url(#gn)"/>
<rect x="64.88" y="1103.80" width="4.00" height="1.20" fill="url(#gn)"/>
<rect x="72.27" y="1103.80" width="4.00" height="1.20" fill="url(#gn)"/>
<rect x="79.67" y="1103.80" width="4.00" height="1.20" fill="url(#gn)"/>
<rect x="87.06" y="1103.58" width="4.00" height="1.20" fill="url(#gp)"/>
<rect x="94.45" y="1101.33" width="4.00" height="2.47" fill="url(#gp)"/>
<rect x="101.85" y="1098.46" width="4.00" height="5.34" fill="url(#gp)"/>
<rect x="109.24" y="1098.15" width="4.00" height="5.65" fill="url(#gp)"/>
<rect x="116.63" y="1098.53" width="4.00" height="5.27" fill="url(#gp)"/>
<rect x="124.02" y="1099.58" width="4.00" height="4.22" fill="url(#gp)"/>
<rect x="131.42" y="1101.61" width="4.00" height="2.19" fill="url(#gp)"/>
<rect x="138.81" y="1101.75" width="4.00" height="2.05" fill="url(#gp)"/>
<rect x="146.20" y="1102.30" width="4.00" height="1.50" fill="url(#gp)"/>
<rect x="153.59" y="1099.49" width="4.00" height="4.31" fill="url(#gp)"/>
<rect x="160.99" y="1099.22" width="4.00" height="4.58" fill="url(#gp)"/>
<rect x="168.38" y="1100.89" width="4.00" height="2.91" fill="url(#gp)"/>
<rect x="175.77" y="1100.79" width="4.00" height="3.01" fill="url(#gp)"/>
<rect x="183.16" y="1100.95" width="4.00" height="2.85" fill="url(#gp)"/>
<rect x="190.56" y="1101.14" width="4.00" height="2.66" fill="url(#gp)"/>
<rect x="197.95" y="1100.65" width="4.00" height="3.15" fill="url(#gp)"/>
<rect x="205.34" y="1102.06" width="4.00" height="1.74" fill="url(#gp)"/>
<rect x="212.74" y="1103.19" width="4.00" height="1.20" fill="url(#gp)"/>
<rect x="220.13" y="1103.80" width="4.00" height="1.20" fill="url(#gn)"/>
<rect x="227.52" y="1103.80" width="4.00" height="3.65" fill="url(#gn)"/>
<rect x="234.91" y="1103.80" width="4.00" height="4.77" fill="url(#gn)"/>
<rect x="242.31" y="1103.80" width="4.00" height="5.99" fill="url(#gn)"/>
<rect x="249.70" y="1103.80" width="4.00" height="7.03" fill="url(#gn)"/>
<rect x="257.09" y="1103.80" width="4.00" height="8.88" fill="url(#gn)"/>
<rect x="264.48" y="1103.80" width="4.00" height="8.89" fill="url(#gn)"/>
<rect x="271.88" y="1103.80" width="4.00" height="8.99" fill="url(#gn)"/>
<rect x="279.27" y="1103.80" width="4.00" height="8.60" fill="url(#gn)"/>
<rect x="286.66" y="1103.80" width="4.00" height="8.41" fill="url(#gn)"/>
<rect x="294.06" y="1103.80" width="4.00" height="6.85" fill="url(#gn)"/>
<rect x="301.45" y="1103.80" width="4.00" height="6.01" fill="url(#gn)"/>
<rect x="308.84" y="1103.80" width="4.00" height="4.05" fill="url(#gn)"/>
<rect x="316.23" y="1103.80" width="4.00" height="1.20" fill="url(#gn)"/>
<rect x="323.63" y="1103.44" width="4.00" height="1.20" fill="url(#gp)"/>
<rect x="331.02" y="1102.88" width="4.00" height="1.20" fill="url(#gp)"/>
<rect x="338.41" y="1101.93" width="4.00" height="1.87" fill="url(#gp)"/>
<rect x="345.80" y="1101.43" width="4.00" height="2.37" fill="url(#gp)"/>
<rect x="353.20" y="1102.22" width="4.00" height="1.58" fill="url(#gp)"/>
<rect x="360.59" y="1102.64" width="4.00" height="1.20" fill="url(#gp)"/>
<rect x="367.98" y="1102.71" width="4.00" height="1.20" fill="url(#gp)"/>
<rect x="375.37" y="1101.41" width="4.00" height="2.39" fill="url(#gp)"/>
<rect x="382.77" y="1099.39" width="4.00" height="4.41" fill="url(#gp)"/>
<rect x="390.16" y="1097.42" width="4.00" height="6.38" fill="url(#gp)"/>
<rect x="397.55" y="1097.59" width="4.00" height="6.21" fill="url(#gp)"/>
<rect x="404.95" y="1098.63" width="4.00" height="5.17" fill="url(#gp)"/>
<rect x="412.34" y="1099.55" width="4.00" height="4.25" fill="url(#gp)"/>
<rect x="419.73" y="1100.67" width="4.00" height="3.13" fill="url(#gp)"/>
<rect x="427.12" y="1102.89" width="4.00" height="1.20" fill="url(#gp)"/>
<rect x="434.52" y="1103.80" width="4.00" height="1.20" fill="url(#gn)"/>
<rect x="441.91" y="1103.80" width="4.00" height="1.70" fill="url(#gn)"/>
<rect x="449.30" y="1103.80" width="4.00" height="1.35" fill="url(#gn)"/>
<rect x="456.69" y="1103.80" width="4.00" height="1.37" fill="url(#gn)"/>
<rect x="464.09" y="1103.80" width="4.00" height="1.30" fill="url(#gn)"/>
<rect x="471.48" y="1103.80" width="4.00" height="2.70" fill="url(#gn)"/>
<rect x="478.87" y="1103.80" width="4.00" height="6.06" fill="url(#gn)"/>
<rect x="486.27" y="1103.80" width="4.00" height="7.17" fill="url(#gn)"/>
<rect x="493.66" y="1103.80" width="4.00" height="7.66" fill="url(#gn)"/>
<rect x="501.05" y="1103.80" width="4.00" height="8.88" fill="url(#gn)"/>
<rect x="508.44" y="1103.80" width="4.00" height="7.51" fill="url(#gn)"/>
<rect x="515.84" y="1103.80" width="4.00" height="3.38" fill="url(#gn)"/>
<rect x="523.23" y="1103.16" width="4.00" height="1.20" fill="url(#gp)"/>
<rect x="530.62" y="1101.56" width="4.00" height="2.24" fill="url(#gp)"/>
<rect x="538.01" y="1099.94" width="4.00" height="3.86" fill="url(#gp)"/>
<rect x="545.41" y="1100.29" width="4.00" height="3.51" fill="url(#gp)"/>
<rect x="552.80" y="1101.59" width="4.00" height="2.21" fill="url(#gp)"/>
<rect x="560.19" y="1101.94" width="4.00" height="1.86" fill="url(#gp)"/>
<rect x="567.59" y="1102.43" width="4.00" height="1.37" fill="url(#gp)"/>
<rect x="574.98" y="1102.50" width="4.00" height="1.30" fill="url(#gp)"/>
<rect x="582.37" y="1099.82" width="4.00" height="3.98" fill="url(#gp)"/>
<rect x="589.76" y="1098.72" width="4.00" height="5.08" fill="url(#gp)"/>
<rect x="597.16" y="1099.05" width="4.00" height="4.75" fill="url(#gp)"/>
<rect x="604.55" y="1100.09" width="4.00" height="3.71" fill="url(#gp)"/>
<rect x="611.94" y="1100.74" width="4.00" height="3.06" fill="url(#gp)"/>
<rect x="619.33" y="1101.21" width="4.00" height="2.59" fill="url(#gp)"/>
<rect x="626.73" y="1100.68" width="4.00" height="3.12" fill="url(#gp)"/>
<rect x="634.12" y="1100.13" width="4.00" height="3.67" fill="url(#gp)"/>
<rect x="641.51" y="1098.27" width="4.00" height="5.53" fill="url(#gp)"/>
<rect x="648.90" y="1098.29" width="4.00" height="5.51" fill="url(#gp)"/>
<rect x="656.30" y="1098.06" width="4.00" height="5.74" fill="url(#gp)"/>
<rect x="663.69" y="1097.15" width="4.00" height="6.65" fill="url(#gp)"/>
<rect x="671.08" y="1095.71" width="4.00" height="8.09" fill="url(#gp)"/>
<rect x="678.48" y="1095.45" width="4.00" height="8.35" fill="url(#gp)"/>
<rect x="685.87" y="1096.15" width="4.00" height="7.65" fill="url(#gp)"/>
<rect x="693.26" y="1096.20" width="4.00" height="7.60" fill="url(#gp)"/>
<rect x="700.65" y="1097.41" width="4.00" height="6.39" fill="url(#gp)"/>
<rect x="708.05" y="1099.43" width="4.00" height="4.37" fill="url(#gp)"/>
<rect x="715.44" y="1100.52" width="4.00" height="3.28" fill="url(#gp)"/>
<rect x="722.83" y="1101.52" width="4.00" height="2.28" fill="url(#gp)"/>
<rect x="730.22" y="1103.80" width="4.00" height="1.20" fill="url(#gn)"/>
<rect x="737.62" y="1103.80" width="4.00" height="1.20" fill="url(#gn)"/>
<rect x="745.01" y="1103.80" width="4.00" height="1.82" fill="url(#gn)"/>
<rect x="752.40" y="1103.80" width="4.00" height="2.03" fill="url(#gn)"/>
<rect x="759.80" y="1103.80" width="4.00" height="1.20" fill="url(#gn)"/>
<rect x="767.19" y="1101.84" width="4.00" height="1.96" fill="url(#gp)"/>
<rect x="774.58" y="1100.35" width="4.00" height="3.45" fill="url(#gp)"/>
<rect x="781.97" y="1100.33" width="4.00" height="3.47" fill="url(#gp)"/>
<rect x="789.37" y="1101.60" width="4.00" height="2.20" fill="url(#gp)"/>
<rect x="796.76" y="1102.38" width="4.00" height="1.42" fill="url(#gp)"/>
<rect x="804.15" y="1103.80" width="4.00" height="1.20" fill="url(#gn)"/>
<rect x="811.54" y="1103.80" width="4.00" height="1.20" fill="url(#gn)"/>
<rect x="818.94" y="1103.80" width="4.00" height="1.20" fill="url(#gn)"/>
<rect x="826.33" y="1103.80" width="4.00" height="1.88" fill="url(#gn)"/>
<rect x="833.72" y="1103.80" width="4.00" height="2.74" fill="url(#gn)"/>
<rect x="841.11" y="1103.80" width="4.00" height="2.37" fill="url(#gn)"/>
<rect x="848.51" y="1103.80" width="4.00" height="2.94" fill="url(#gn)"/>
<rect x="855.90" y="1103.80" width="4.00" height="2.84" fill="url(#gn)"/>
<rect x="863.29" y="1103.80" width="4.00" height="2.69" fill="url(#gn)"/>
<rect x="870.69" y="1103.80" width="4.00" height="2.51" fill="url(#gn)"/>
<rect x="878.08" y="1103.80" width="4.00" height="1.20" fill="url(#gn)"/>
<rect x="885.47" y="1103.80" width="4.00" height="1.20" fill="url(#gn)"/>
<rect x="892.86" y="1103.80" width="4.00" height="1.20" fill="url(#gn)"/>
<rect x="900.26" y="1103.80" width="4.00" height="1.20" fill="url(#gn)"/>
<rect x="907.65" y="1103.80" width="4.00" height="1.20" fill="url(#gn)"/>
<rect x="915.04" y="1103.56" width="4.00" height="1.20" fill="url(#gp)"/>
<rect x="922.43" y="1101.98" width="4.00" height="1.82" fill="url(#gp)"/>
<rect x="929.83" y="1101.45" width="4.00" height="2.35" fill="url(#gp)"/>
<rect x="937.22" y="1102.80" width="4.00" height="1.20" fill="url(#gp)"/>
<rect x="944.61" y="1103.80" width="4.00" height="1.20" fill="url(#gn)"/>
<rect x="952.01" y="1103.80" width="4.00" height="3.13" fill="url(#gn)"/>
<rect x="959.40" y="1103.80" width="4.00" height="4.46" fill="url(#gn)"/>
<rect x="966.79" y="1103.80" width="4.00" height="4.72" fill="url(#gn)"/>
<rect x="974.18" y="1103.80" width="4.00" height="5.27" fill="url(#gn)"/>
<rect x="981.58" y="1103.80" width="4.00" height="4.10" fill="url(#gn)"/>
<rect x="988.97" y="1103.80" width="4.00" height="1.64" fill="url(#gn)"/>
<rect x="996.36" y="1102.25" width="4.00" height="1.55" fill="url(#gp)"/>
<rect x="1003.75" y="1099.94" width="4.00" height="3.86" fill="url(#gp)"/>
<rect x="1011.15" y="1097.20" width="4.00" height="6.60" fill="url(#gp)"/>
<rect x="1018.54" y="1095.14" width="4.00" height="8.66" fill="url(#gp)"/>
<rect x="1025.93" y="1094.92" width="4.00" height="8.88" fill="url(#gp)"/>
<rect x="1033.33" y="1095.28" width="4.00" height="8.52" fill="url(#gp)"/>
<rect x="1040.72" y="1094.17" width="4.00" height="9.63" fill="url(#gp)"/>
<rect x="1048.11" y="1093.05" width="4.00" height="10.75" fill="url(#gp)"/>
<rect x="1055.50" y="1092.52" width="4.00" height="11.28" fill="url(#gp)"/>
<rect x="1062.90" y="1093.55" width="4.00" height="10.25" fill="url(#gp)"/>
<rect x="1070.29" y="1095.65" width="4.00" height="8.15" fill="url(#gp)"/>
<rect x="1077.68" y="1096.32" width="4.00" height="7.48" fill="url(#gp)"/>
<rect x="1085.07" y="1095.43" width="4.00" height="8.37" fill="url(#gp)"/>
<rect x="1092.47" y="1095.03" width="4.00" height="8.77" fill="url(#gp)"/>
<rect x="1099.86" y="1095.54" width="4.00" height="8.26" fill="url(#gp)"/>
<rect x="1107.25" y="1096.60" width="4.00" height="7.20" fill="url(#gp)"/>
<rect x="1114.64" y="1096.84" width="4.00" height="6.96" fill="url(#gp)"/>
<rect x="1122.04" y="1096.71" width="4.00" height="7.09" fill="url(#gp)"/>
<rect x="1129.43" y="1096.93" width="4.00" height="6.87" fill="url(#gp)"/>
<rect x="1136.82" y="1099.76" width="4.00" height="4.04" fill="url(#gp)"/>
<rect x="1144.22" y="1102.17" width="4.00" height="1.63" fill="url(#gp)"/>
<rect x="1151.61" y="1103.80" width="4.00" height="1.60" fill="url(#gn)"/>
<rect x="1159.00" y="1103.80" width="4.00" height="5.18" fill="url(#gn)"/>
<rect x="1166.39" y="1103.80" width="4.00" height="6.46" fill="url(#gn)"/>
<rect x="1173.79" y="1103.80" width="4.00" height="7.41" fill="url(#gn)"/>
<rect x="1181.18" y="1103.80" width="4.00" height="9.31" fill="url(#gn)"/>
<rect x="1188.57" y="1103.80" width="4.00" height="11.23" fill="url(#gn)"/>
<rect x="1195.96" y="1103.80" width="4.00" height="13.16" fill="url(#gn)"/>
<rect x="1203.36" y="1103.80" width="4.00" height="12.39" fill="url(#gn)"/>
<rect x="1210.75" y="1103.80" width="4.00" height="11.70" fill="url(#gn)"/>
<rect x="1218.14" y="1103.80" width="4.00" height="10.84" fill="url(#gn)"/>
<rect x="1225.54" y="1103.80" width="4.00" height="9.32" fill="url(#gn)"/>
<rect x="1232.93" y="1103.80" width="4.00" height="8.75" fill="url(#gn)"/>
<rect x="1240.32" y="1103.80" width="4.00" height="8.05" fill="url(#gn)"/>
<rect x="1247.71" y="1103.80" width="4.00" height="7.83" fill="url(#gn)"/>
<rect x="1255.11" y="1103.80" width="4.00" height="8.33" fill="url(#gn)"/>
<rect x="1262.50" y="1103.80" width="4.00" height="7.45" fill="url(#gn)"/>
<rect x="1269.89" y="1103.80" width="4.00" height="7.36" fill="url(#gn)"/>
<rect x="1277.28" y="1103.80" width="4.00" height="6.78" fill="url(#gn)"/>
<rect x="1284.68" y="1103.80" width="4.00" height="6.38" fill="url(#gn)"/>
<rect x="1292.07" y="1103.80" width="4.00" height="3.41" fill="url(#gn)"/>
<rect x="1299.46" y="1103.80" width="4.00" height="1.99" fill="url(#gn)"/>
<rect x="1306.85" y="1103.80" width="4.00" height="2.18" fill="url(#gn)"/>
<rect x="1314.25" y="1103.80" width="4.00" height="1.84" fill="url(#gn)"/>
<rect x="1321.64" y="1103.80" width="4.00" height="1.50" fill="url(#gn)"/>
<rect x="1329.03" y="1103.80" width="4.00" height="1.28" fill="url(#gn)"/>
<rect x="1336.43" y="1103.80" width="4.00" height="2.46" fill="url(#gn)"/>
<rect x="1343.82" y="1103.80" width="4.00" height="3.44" fill="url(#gn)"/>
<rect x="1351.21" y="1103.80" width="4.00" height="3.89" fill="url(#gn)"/>
<rect x="1358.60" y="1103.80" width="4.00" height="3.62" fill="url(#gn)"/>
<rect x="1366.00" y="1103.80" width="4.00" height="2.39" fill="url(#gn)"/>
<rect x="1373.39" y="1103.80" width="4.00" height="1.20" fill="url(#gn)"/>
<rect x="1380.78" y="1103.80" width="4.00" height="1.20" fill="url(#gn)"/>
<rect x="1388.17" y="1103.80" width="4.00" height="1.62" fill="url(#gn)"/>
<rect x="1395.57" y="1103.80" width="4.00" height="2.06" fill="url(#gn)"/>
<rect x="1402.96" y="1103.80" width="4.00" height="2.35" fill="url(#gn)"/>
<rect x="1410.35" y="1103.80" width="4.00" height="1.20" fill="url(#gn)"/>
<rect x="1417.75" y="1101.06" width="4.00" height="2.74" fill="url(#gp)"/>
<rect x="1425.14" y="1100.43" width="4.00" height="3.37" fill="url(#gp)"/>
<rect x="1432.53" y="1101.50" width="4.00" height="2.30" fill="url(#gp)"/>
<rect x="1439.92" y="1102.22" width="4.00" height="1.58" fill="url(#gp)"/>
<rect x="1447.32" y="1102.28" width="4.00" height="1.52" fill="url(#gp)"/>
<rect x="1454.71" y="1103.80" width="4.00" height="1.20" fill="url(#gn)"/>
<rect x="1462.10" y="1103.80" width="4.00" height="1.20" fill="url(#gn)"/>
<rect x="1469.49" y="1103.80" width="4.00" height="1.20" fill="url(#gn)"/>
<rect x="1476.89" y="1103.80" width="4.00" height="1.88" fill="url(#gn)"/>
<rect x="1484.28" y="1103.80" width="4.00" height="3.77" fill="url(#gn)"/>
<rect x="1491.67" y="1103.80" width="4.00" height="4.66" fill="url(#gn)"/>
<rect x="1499.07" y="1103.80" width="4.00" height="3.77" fill="url(#gn)"/>
<rect x="1506.46" y="1103.80" width="4.00" height="4.06" fill="url(#gn)"/>
<rect x="1513.85" y="1103.80" width="4.00" height="2.40" fill="url(#gn)"/>
<rect x="1521.24" y="1103.80" width="4.00" height="1.36" fill="url(#gn)"/>
<rect x="1528.64" y="1103.80" width="4.00" height="2.03" fill="url(#gn)"/>
<rect x="1536.03" y="1103.80" width="4.00" height="3.16" fill="url(#gn)"/>
<rect x="1543.42" y="1103.80" width="4.00" height="4.12" fill="url(#gn)"/>
<rect x="1550.81" y="1103.80" width="4.00" height="3.12" fill="url(#gn)"/>
<rect x="1558.21" y="1103.80" width="4.00" height="2.26" fill="url(#gn)"/>
<rect x="1565.60" y="1103.80" width="4.00" height="1.20" fill="url(#gn)"/>
<rect x="1572.99" y="1103.25" width="4.00" height="1.20" fill="url(#gp)"/>
<rect x="1580.38" y="1101.93" width="4.00" height="1.87" fill="url(#gp)"/>
<rect x="1587.78" y="1101.31" width="4.00" height="2.49" fill="url(#gp)"/>
<rect x="1595.17" y="1100.88" width="4.00" height="2.92" fill="url(#gp)"/>
<rect x="1602.56" y="1099.28" width="4.00" height="4.52" fill="url(#gp)"/>
<rect x="1609.96" y="1097.61" width="4.00" height="6.19" fill="url(#gp)"/>
<rect x="1617.35" y="1097.20" width="4.00" height="6.60" fill="url(#gp)"/>
<rect x="1624.74" y="1097.90" width="4.00" height="5.90" fill="url(#gp)"/>
<rect x="1632.13" y="1097.19" width="4.00" height="6.61" fill="url(#gp)"/>
<rect x="1639.53" y="1097.25" width="4.00" height="6.55" fill="url(#gp)"/>
<rect x="1646.92" y="1096.73" width="4.00" height="7.07" fill="url(#gp)"/>
<rect x="1654.31" y="1096.36" width="4.00" height="7.44" fill="url(#gp)"/>
<rect x="1661.70" y="1097.49" width="4.00" height="6.31" fill="url(#gp)"/>
<rect x="1669.10" y="1098.73" width="4.00" height="5.07" fill="url(#gp)"/>
<rect x="1676.49" y="1098.43" width="4.00" height="5.37" fill="url(#gp)"/>
<rect x="1683.88" y="1099.90" width="4.00" height="3.90" fill="url(#gp)"/>
<rect x="1691.28" y="1101.29" width="4.00" height="2.51" fill="url(#gp)"/>
<rect x="1698.67" y="1102.98" width="4.00" height="1.20" fill="url(#gp)"/>
<rect x="1706.06" y="1103.80" width="4.00" height="1.20" fill="url(#gn)"/>
<rect x="1713.45" y="1103.80" width="4.00" height="1.20" fill="url(#gn)"/>
<rect x="1720.85" y="1103.80" width="4.00" height="2.70" fill="url(#gn)"/>
<rect x="1728.24" y="1103.80" width="4.00" height="3.44" fill="url(#gn)"/>
<rect x="1735.63" y="1103.80" width="4.00" height="4.25" fill="url(#gn)"/>
<rect x="1743.02" y="1103.80" width="4.00" height="3.72" fill="url(#gn)"/>
<rect x="1750.42" y="1103.80" width="4.00" height="2.75" fill="url(#gn)"/>
<rect x="1757.81" y="1103.80" width="4.00" height="1.68" fill="url(#gn)"/>
<rect x="1765.20" y="1103.73" width="4.00" height="1.20" fill="url(#gp)"/>
<rect x="1772.59" y="1102.74" width="4.00" height="1.20" fill="url(#gp)"/>
<rect x="1779.99" y="1100.43" width="4.00" height="3.37" fill="url(#gp)"/>
<rect x="1787.38" y="1098.13" width="4.00" height="5.67" fill="url(#gp)"/>
<rect x="1794.77" y="1097.12" width="4.00" height="6.68" fill="url(#gp)"/>
<rect x="1802.17" y="1093.33" width="4.00" height="10.47" fill="url(#gp)"/>
<rect x="1809.56" y="1091.09" width="4.00" height="12.71" fill="url(#gp)"/>
<rect x="1816.95" y="1086.84" width="4.00" height="16.96" fill="url(#gp)"/>
<rect x="1824.34" y="1083.26" width="4.00" height="20.54" fill="url(#gp)"/>
<rect x="1831.74" y="1078.75" width="4.00" height="25.05" fill="url(#gp)"/>
<rect x="1839.13" y="1077.43" width="4.00" height="26.37" fill="url(#gp)"/>
<rect x="1846.52" y="1073.21" width="4.00" height="30.59" fill="url(#gp)"/>
<rect x="1853.91" y="1073.87" width="4.00" height="29.93" fill="url(#gp)"/>
<rect x="1861.31" y="1073.12" width="4.00" height="30.68" fill="url(#gp)"/>
<rect x="1868.70" y="1073.40" width="4.00" height="30.40" fill="url(#gp)"/>
<line x1="2.00" y1="1103.80" x2="1904.00" y2="1103.80" stroke="#a4a4a4" stroke-width="1.4"/>
<polyline points="2,1111.4 7.7,1111.4 15.1,1111.1 22.5,1111.3 29.9,1111.7 37.3,1112.5 44.7,1113.3 52.1,1114.1 59.5,1114.5 66.9,1114.6 74.3,1114.7 81.7,1114.9 89.1,1114.9 96.5,1114.2 103.8,1112.9 111.2,1111.5 118.6,1110.2 126.0,1109.1 133.4,1108.6 140.8,1108.1 148.2,1107.7 155.6,1106.6 163.0,1105.5 170.4,1104.7 177.8,1104.0 185.2,1103.3 192.6,1102.6 200.0,1101.8 207.3,1101.4 214.7,1101.2 222.1,1101.5 229.5,1102.4 236.9,1103.6 244.3,1105.1 251.7,1106.9 259.1,1109.1 266.5,1111.3 273.9,1113.6 281.3,1115.7 288.7,1117.8 296.1,1119.5 303.4,1121.0 310.8,1122.1 318.2,1122.3 325.6,1122.2 333.0,1122.0 340.4,1121.5 347.8,1120.9 355.2,1120.5 362.6,1120.2 370.0,1119.9 377.4,1119.3 384.8,1118.2 392.2,1116.7 399.6,1115.1 406.9,1113.8 414.3,1112.7 421.7,1112.0 429.1,1111.7 436.5,1111.9 443.9,1112.3 451.3,1112.6 458.7,1113.0 466.1,1113.3 473.5,1114.0 480.9,1115.5 488.3,1117.3 495.7,1119.2 503.1,1121.4 510.4,1123.3 517.8,1124.2 525.2,1124.0 532.6,1123.4 540.0,1122.5 547.4,1121.6 554.8,1121.0 562.2,1120.6 569.6,1120.2 577.0,1119.9 584.4,1118.9 591.8,1117.6 599.2,1116.5 606.5,1115.5 613.9,1114.8 621.3,1114.1 628.7,1113.3 636.1,1112.4 643.5,1111.0 650.9,1109.7 658.3,1108.2 665.7,1106.6 673.1,1104.5 680.5,1102.5 687.9,1100.5 695.3,1098.6 702.7,1097.0 710.0,1095.9 717.4,1095.1 724.8,1094.6 732.2,1094.7 739.6,1094.9 747.0,1095.3 754.4,1095.8 761.8,1096.1 769.2,1095.6 776.6,1094.7 784.0,1093.8 791.4,1093.3 798.8,1092.9 806.2,1093.0 813.5,1093.3 820.9,1093.5 828.3,1093.9 835.7,1094.6 843.1,1095.2 850.5,1095.9 857.9,1096.7 865.3,1097.3 872.7,1098.0 880.1,1098.1 887.5,1098.2 894.9,1098.3 902.3,1098.4 909.6,1098.5 917.0,1098.4 924.4,1098.0 931.8,1097.4 939.2,1097.1 946.6,1097.3 954.0,1098.1 961.4,1099.2 968.8,1100.4 976.2,1101.7 983.6,1102.7 991.0,1103.1 998.4,1102.7 1005.8,1101.8 1013.1,1100.1 1020.5,1098.0 1027.9,1095.7 1035.3,1093.6 1042.7,1091.2 1050.1,1088.5 1057.5,1085.7 1064.9,1083.1 1072.3,1081.1 1079.7,1079.2 1087.1,1077.1 1094.5,1074.9 1101.9,1072.9 1109.3,1071.1 1116.6,1069.3 1124.0,1067.6 1131.4,1065.8 1138.8,1064.8 1146.2,1064.4 1153.6,1064.8 1161.0,1066.1 1168.4,1067.7 1175.8,1069.6 1183.2,1071.9 1190.6,1074.7 1198.0,1078.0 1205.4,1081.1 1212.7,1084.0 1220.1,1086.7 1227.5,1089.1 1234.9,1091.3 1242.3,1093.3 1249.7,1095.2 1257.1,1097.3 1264.5,1099.2 1271.9,1101.0 1279.3,1102.7 1286.7,1104.3 1294.1,1105.2 1301.5,1105.7 1308.9,1106.2 1316.2,1106.7 1323.6,1107.0 1331.0,1107.4 1338.4,1108.0 1345.8,1108.8 1353.2,1109.8 1360.6,1110.7 1368.0,1111.3 1375.4,1111.5 1382.8,1111.7 1390.2,1112.1 1397.6,1112.7 1405.0,1113.2 1412.4,1113.4 1419.7,1112.7 1427.1,1111.9 1434.5,1111.3 1441.9,1110.9 1449.3,1110.5 1456.7,1110.6 1464.1,1110.7 1471.5,1110.9 1478.9,1111.3 1486.3,1112.3 1493.7,1113.5 1501.1,1114.4 1508.5,1115.4 1515.9,1116.0 1523.2,1116.4 1530.6,1116.9 1538.0,1117.6 1545.4,1118.7 1552.8,1119.5 1560.2,1120.0 1567.6,1120.2 1575.0,1120.0 1582.4,1119.6 1589.8,1118.9 1597.2,1118.2 1604.6,1117.1 1612.0,1115.5 1619.3,1113.9 1626.7,1112.4 1634.1,1110.8 1641.5,1109.1 1648.9,1107.4 1656.3,1105.5 1663.7,1103.9 1671.1,1102.7 1678.5,1101.3 1685.9,1100.3 1693.3,1099.7 1700.7,1099.5 1708.1,1099.6 1715.5,1099.8 1722.8,1100.5 1730.2,1101.3 1737.6,1102.4 1745.0,1103.3 1752.4,1104.0 1759.8,1104.4 1767.2,1104.4 1774.6,1104.1 1782.0,1103.3 1789.4,1101.9 1796.8,1100.2 1804.2,1097.6 1811.6,1094.4 1819.0,1090.2 1826.3,1085.0 1833.7,1078.8 1841.1,1072.2 1848.5,1064.5 1855.9,1057.1 1863.3,1049.4 1870.7,1041.8" fill="none" stroke="#ee0000" stroke-width="1.25" stroke-linejoin="round"/>
<polyline points="2,1107.9 7.7,1107.9 15.1,1109.8 22.5,1112.0 29.9,1113.5 37.3,1115.8 44.7,1116.4 52.1,1117.3 59.5,1115.8 66.9,1115.1 74.3,1115.3 81.7,1115.7 89.1,1114.6 96.5,1111.8 103.8,1107.6 111.2,1105.8 118.6,1104.9 126.0,1104.9 133.4,1106.4 140.8,1106.0 148.2,1106.2 155.6,1102.3 163.0,1100.9 170.4,1101.8 177.8,1101.0 185.2,1100.4 192.6,1099.9 200.0,1098.7 207.3,1099.6 214.7,1100.6 222.1,1102.7 229.5,1106.1 236.9,1108.4 244.3,1111.1 251.7,1113.9 259.1,1118.0 266.5,1120.2 273.9,1122.6 281.3,1124.3 288.7,1126.2 296.1,1126.4 303.4,1127.0 310.8,1126.1 318.2,1123.2 325.6,1121.8 333.0,1121.0 340.4,1119.6 347.8,1118.5 355.2,1118.9 362.6,1119.1 370.0,1118.9 377.4,1117.0 384.8,1113.8 392.2,1110.3 399.6,1108.9 406.9,1108.6 414.3,1108.5 421.7,1108.8 429.1,1110.8 436.5,1112.5 443.9,1114.0 451.3,1114.0 458.7,1114.4 466.1,1114.6 473.5,1116.7 480.9,1121.6 488.3,1124.5 495.7,1126.9 503.1,1130.3 510.4,1130.8 517.8,1127.5 525.2,1123.4 532.6,1121.2 540.0,1118.6 547.4,1118.1 554.8,1118.8 562.2,1118.7 569.6,1118.9 577.0,1118.6 584.4,1114.9 591.8,1112.6 599.2,1111.7 606.5,1111.8 613.9,1111.7 621.3,1111.5 628.7,1110.2 636.1,1108.7 643.5,1105.5 650.9,1104.2 658.3,1102.5 665.7,1099.9 673.1,1096.5 680.5,1094.1 687.9,1092.9 695.3,1091.0 702.7,1090.7 710.0,1091.6 717.4,1091.8 724.8,1092.3 732.2,1095.2 739.6,1095.6 747.0,1097.1 754.4,1097.9 761.8,1097.0 769.2,1093.6 776.6,1091.3 784.0,1090.4 791.4,1091.1 798.8,1091.5 806.2,1093.3 813.5,1094.5 820.9,1094.1 828.3,1095.8 835.7,1097.4 843.1,1097.6 850.5,1098.9 857.9,1099.5 865.3,1100.0 872.7,1100.5 880.1,1098.7 887.5,1098.7 894.9,1098.7 902.3,1098.8 909.6,1098.7 917.0,1098.2 924.4,1096.1 931.8,1095.0 939.2,1096.1 946.6,1098.0 954.0,1101.2 961.4,1103.7 968.8,1105.1 976.2,1107.0 983.6,1106.8 991.0,1104.8 998.4,1101.2 1005.8,1097.9 1013.1,1093.5 1020.5,1089.3 1027.9,1086.9 1035.3,1085.1 1042.7,1081.6 1050.1,1077.8 1057.5,1074.4 1064.9,1072.9 1072.3,1072.9 1079.7,1071.7 1087.1,1068.8 1094.5,1066.2 1101.9,1064.6 1109.3,1063.9 1116.6,1062.4 1124.0,1060.5 1131.4,1059.0 1138.8,1060.8 1146.2,1062.8 1153.6,1066.4 1161.0,1071.3 1168.4,1074.2 1175.8,1077.0 1183.2,1081.2 1190.6,1086.0 1198.0,1091.2 1205.4,1093.5 1212.7,1095.7 1220.1,1097.6 1227.5,1098.4 1234.9,1100.0 1242.3,1101.3 1249.7,1103.1 1257.1,1105.6 1264.5,1106.6 1271.9,1108.4 1279.3,1109.5 1286.7,1110.7 1294.1,1108.6 1301.5,1107.6 1308.9,1108.4 1316.2,1108.5 1323.6,1108.5 1331.0,1108.6 1338.4,1110.4 1345.8,1112.3 1353.2,1113.7 1360.6,1114.3 1368.0,1113.7 1375.4,1112.3 1382.8,1112.7 1390.2,1113.8 1397.6,1114.7 1405.0,1115.6 1412.4,1114.1 1419.7,1110.0 1427.1,1108.5 1434.5,1109.0 1441.9,1109.3 1449.3,1109.0 1456.7,1110.8 1464.1,1110.9 1471.5,1111.8 1478.9,1113.2 1486.3,1116.1 1493.7,1118.1 1501.1,1118.2 1508.5,1119.5 1515.9,1118.4 1523.2,1117.7 1530.6,1118.9 1538.0,1120.8 1545.4,1122.8 1552.8,1122.6 1560.2,1122.3 1567.6,1120.8 1575.0,1119.5 1582.4,1117.7 1589.8,1116.5 1597.2,1115.3 1604.6,1112.6 1612.0,1109.3 1619.3,1107.3 1626.7,1106.5 1634.1,1104.2 1641.5,1102.6 1648.9,1100.3 1656.3,1098.1 1663.7,1097.6 1671.1,1097.6 1678.5,1095.9 1685.9,1096.4 1693.3,1097.2 1700.7,1098.7 1708.1,1099.8 1715.5,1100.7 1722.8,1103.2 1730.2,1104.8 1737.6,1106.6 1745.0,1107.1 1752.4,1106.8 1759.8,1106.1 1767.2,1104.3 1774.6,1103.1 1782.0,1099.9 1789.4,1096.2 1796.8,1093.5 1804.2,1087.1 1811.6,1081.7 1819.0,1073.2 1826.3,1064.5 1833.7,1053.7 1841.1,1045.8 1848.5,1034.0 1855.9,1027.1 1863.3,1018.7 1870.7,1011.4" fill="none" stroke="#e6e6e6" stroke-width="1.55" stroke-linejoin="round"/>
<rect x="2.00" y="795.60" width="1995.00" height="6.10" fill="#3e3e3e"/>
<rect x="2.00" y="796.40" width="1995.00" height="4.50" fill="#4b4b4b"/>
<rect x="988.00" y="796.60" width="19.20" height="1.20" fill="#a8a8a8"/>
<rect x="988.00" y="799.20" width="19.20" height="1.20" fill="#a8a8a8"/>
<rect x="2.00" y="992.90" width="1995.00" height="6.10" fill="#3e3e3e"/>
<rect x="2.00" y="993.70" width="1995.00" height="4.50" fill="#4b4b4b"/>
<rect x="988.00" y="993.90" width="19.20" height="1.20" fill="#a8a8a8"/>
<rect x="988.00" y="996.50" width="19.20" height="1.20" fill="#a8a8a8"/>
<line x1="1904.00" y1="59.00" x2="1904.00" y2="1143.50" stroke="#2db52d" stroke-width="1.7"/>
<line x1="2.00" y1="1143.40" x2="1905.00" y2="1143.40" stroke="#2db52d" stroke-width="1.6"/>
<line x1="74.50" y1="1143.00" x2="74.50" y2="1149.00" stroke="#2db52d" stroke-width="1.5"/>
<line x1="237.00" y1="1143.00" x2="237.00" y2="1149.00" stroke="#2db52d" stroke-width="1.5"/>
<line x1="392.40" y1="1143.00" x2="392.40" y2="1149.00" stroke="#2db52d" stroke-width="1.5"/>
<line x1="554.20" y1="1143.00" x2="554.20" y2="1149.00" stroke="#2db52d" stroke-width="1.5"/>
<line x1="710.50" y1="1143.00" x2="710.50" y2="1149.00" stroke="#2db52d" stroke-width="1.5"/>
<line x1="865.80" y1="1143.00" x2="865.80" y2="1149.00" stroke="#2db52d" stroke-width="1.5"/>
<line x1="1027.50" y1="1143.00" x2="1027.50" y2="1149.00" stroke="#2db52d" stroke-width="1.5"/>
<line x1="1197.00" y1="1143.00" x2="1197.00" y2="1149.00" stroke="#2db52d" stroke-width="1.5"/>
<line x1="1346.00" y1="1143.00" x2="1346.00" y2="1149.00" stroke="#2db52d" stroke-width="1.5"/>
<line x1="1515.50" y1="1143.00" x2="1515.50" y2="1149.00" stroke="#2db52d" stroke-width="1.5"/>
<line x1="1678.00" y1="1143.00" x2="1678.00" y2="1149.00" stroke="#2db52d" stroke-width="1.5"/>
<line x1="1833.50" y1="1143.00" x2="1833.50" y2="1149.00" stroke="#2db52d" stroke-width="1.5"/>
<line x1="392.40" y1="1165.00" x2="392.40" y2="1186.00" stroke="#1f8a1f" stroke-width="1.5"/>
<polygon points="1904,67.0 1914.5,71.0 1904,75.0" fill="#2fc435"/>
<text x="1917.0" y="78.3" font-size="18.5" fill="#fff" textLength="45.0" lengthAdjust="spacingAndGlyphs">24000</text>
<polygon points="1904,210.3 1914.5,214.3 1904,218.3" fill="#2fc435"/>
<text x="1917.0" y="221.6" font-size="18.5" fill="#fff" textLength="45.0" lengthAdjust="spacingAndGlyphs">22000</text>
<polygon points="1904,354.7 1914.5,358.7 1904,362.7" fill="#2fc435"/>
<text x="1917.0" y="366.0" font-size="18.5" fill="#fff" textLength="45.0" lengthAdjust="spacingAndGlyphs">20000</text>
<polygon points="1904,499.6 1914.5,503.6 1904,507.6" fill="#2fc435"/>
<text x="1917.0" y="510.9" font-size="18.5" fill="#fff" textLength="45.0" lengthAdjust="spacingAndGlyphs">18000</text>
<polygon points="1904,644.3 1914.5,648.3 1904,652.3" fill="#2fc435"/>
<text x="1917.0" y="655.6" font-size="18.5" fill="#fff" textLength="45.0" lengthAdjust="spacingAndGlyphs">16000</text>
<polygon points="1904,788.0 1914.5,792.0 1904,796.0" fill="#2fc435"/>
<line x1="1904.00" y1="143.50" x2="1909.00" y2="143.50" stroke="#2db52d" stroke-width="1.4"/>
<line x1="1904.00" y1="287.00" x2="1909.00" y2="287.00" stroke="#2db52d" stroke-width="1.4"/>
<line x1="1904.00" y1="431.00" x2="1909.00" y2="431.00" stroke="#2db52d" stroke-width="1.4"/>
<line x1="1904.00" y1="576.00" x2="1909.00" y2="576.00" stroke="#2db52d" stroke-width="1.4"/>
<line x1="1904.00" y1="720.00" x2="1909.00" y2="720.00" stroke="#2db52d" stroke-width="1.4"/>
<polygon points="1904,814.3 1914.5,818.3 1904,822.3" fill="#2fc435"/>
<text x="1917.5" y="825.3" font-size="18" fill="#fff" textLength="26.6" lengthAdjust="spacingAndGlyphs">100</text>
<polygon points="1904,894.2 1914.5,898.2 1904,902.2" fill="#2fc435"/>
<text x="1917.5" y="905.2" font-size="18" fill="#fff" textLength="17.5" lengthAdjust="spacingAndGlyphs">50</text>
<polygon points="1904,972.0 1914.5,976.0 1904,980.0" fill="#2fc435"/>
<text x="1917.5" y="983.0" font-size="18" fill="#fff" textLength="8.8" lengthAdjust="spacingAndGlyphs">0</text>
<line x1="1904.00" y1="857.80" x2="1909.00" y2="857.80" stroke="#2db52d" stroke-width="1.4"/>
<line x1="1904.00" y1="936.10" x2="1909.00" y2="936.10" stroke="#2db52d" stroke-width="1.4"/>
<polygon points="1904,998.5 1914.5,1002.5 1904,1006.5" fill="#2fc435"/>
<polygon points="1904,1031.8 1914.5,1035.8 1904,1039.8" fill="#2fc435"/>
<polygon points="1904,1065.7 1914.5,1069.7 1904,1073.7" fill="#2fc435"/>
<polygon points="1904,1099.8 1914.5,1103.8 1904,1107.8" fill="#2fc435"/>
<polygon points="1904,1132.5 1914.5,1136.5 1904,1140.5" fill="#2fc435"/>
<line x1="1904.00" y1="1020.30" x2="1909.00" y2="1020.30" stroke="#2db52d" stroke-width="1.4"/>
<line x1="1904.00" y1="1052.90" x2="1909.00" y2="1052.90" stroke="#2db52d" stroke-width="1.4"/>
<line x1="1904.00" y1="1086.30" x2="1909.00" y2="1086.30" stroke="#2db52d" stroke-width="1.4"/>
<line x1="1904.00" y1="1120.00" x2="1909.00" y2="1120.00" stroke="#2db52d" stroke-width="1.4"/>
<text x="1917.0" y="1110.5" font-size="18" fill="#fff" textLength="8.8" lengthAdjust="spacingAndGlyphs">0</text>
<text x="1918.0" y="1138.5" font-size="18" fill="#fff" textLength="35.7" lengthAdjust="spacingAndGlyphs">-500</text>
<polygon points="1906,129.8 1913,118.5 1997,118.5 1997,141.0 1913,141.0" fill="#2db830"/>
<text x="1915.5" y="136.3" font-size="18" fill="#000" textLength="46.0" lengthAdjust="spacingAndGlyphs">23194</text>
<rect x="1904.50" y="357.00" width="71.50" height="19.00" fill="#c4f6ff"/>
<text x="1906.0" y="373.0" font-size="17.5" fill="#000" textLength="68.0" lengthAdjust="spacingAndGlyphs">19892.44</text>
<polygon points="1906,836.8 1913,825.4 1997,825.4 1997,848.1 1913,848.1" fill="#fff"/>
<text x="1915.5" y="843.4" font-size="18" fill="#000" textLength="61.0" lengthAdjust="spacingAndGlyphs">88.4764</text>
<polygon points="1906,1011.8 1913,1001.4 1997,1001.4 1997,1022.3 1913,1022.3" fill="#fff"/>
<text x="1915.5" y="1018.4" font-size="18" fill="#000" textLength="78.5" lengthAdjust="spacingAndGlyphs">1361.7064</text>
<polygon points="1906,1042.8 1913,1032.0 1997,1032.0 1997,1053.5 1913,1053.5" fill="#ff0000"/>
<text x="1915.5" y="1049.3" font-size="18" fill="#fff" textLength="70.0" lengthAdjust="spacingAndGlyphs">913.3204</text>
<polygon points="1906,1073.2 1913,1062.3 1997,1062.3 1997,1084.2 1913,1084.2" fill="#00f400"/>
<text x="1915.5" y="1079.8" font-size="18" fill="#000" textLength="59.5" lengthAdjust="spacingAndGlyphs">448.386</text>
<text x="140.8" y="1162.5" font-size="17.5" fill="#e8e8e8" textLength="29.2" lengthAdjust="spacingAndGlyphs">Nov</text>
<text x="299.5" y="1162.5" font-size="17.5" fill="#e8e8e8" textLength="28.5" lengthAdjust="spacingAndGlyphs">Dec</text>
<text x="459.5" y="1162.5" font-size="17.5" fill="#e8e8e8" textLength="27.5" lengthAdjust="spacingAndGlyphs">Jan</text>
<text x="619.0" y="1162.5" font-size="17.5" fill="#e8e8e8" textLength="26.5" lengthAdjust="spacingAndGlyphs">Feb</text>
<text x="773.7" y="1162.5" font-size="17.5" fill="#e8e8e8" textLength="27.3" lengthAdjust="spacingAndGlyphs">Mar</text>
<text x="932.0" y="1162.5" font-size="17.5" fill="#e8e8e8" textLength="26.0" lengthAdjust="spacingAndGlyphs">Apr</text>
<text x="1097.0" y="1162.5" font-size="17.5" fill="#e8e8e8" textLength="30.0" lengthAdjust="spacingAndGlyphs">May</text>
<text x="1256.0" y="1162.5" font-size="17.5" fill="#e8e8e8" textLength="29.0" lengthAdjust="spacingAndGlyphs">Jun</text>
<text x="1418.0" y="1162.5" font-size="17.5" fill="#e8e8e8" textLength="23.0" lengthAdjust="spacingAndGlyphs">Jul</text>
<text x="1582.5" y="1162.5" font-size="17.5" fill="#e8e8e8" textLength="27.0" lengthAdjust="spacingAndGlyphs">Aug</text>
<text x="1742.0" y="1162.5" font-size="17.5" fill="#e8e8e8" textLength="27.5" lengthAdjust="spacingAndGlyphs">Sep</text>
<text x="176.0" y="1183.5" font-size="17.5" fill="#e8e8e8" textLength="36.0" lengthAdjust="spacingAndGlyphs">2023</text>
<text x="1130.0" y="1183.5" font-size="17.5" fill="#e8e8e8" textLength="36.0" lengthAdjust="spacingAndGlyphs">2024</text>
<rect x="998.00" y="1169.50" width="76.00" height="17.00" fill="#b8f2ff"/>
<text x="1000.0" y="1184.5" font-size="17.5" fill="#1a2a3a" textLength="72.0" lengthAdjust="spacingAndGlyphs">05/01/24</text>
<rect x="0.00" y="0.00" width="2000.00" height="3.00" fill="#fff"/>
<rect x="0.00" y="0.00" width="2.00" height="1188.00" fill="#fff"/>
<rect x="1997.00" y="0.00" width="3.00" height="1188.00" fill="#fff"/>
<rect x="0.00" y="1186.50" width="2000.00" height="1.50" fill="#fff"/>
<rect x="2.00" y="3.00" width="1998.00" height="14.00" fill="#d0d0d0"/>
<text x="3.0" y="15.0" font-size="14.2" fill="#33281c" textLength="113.5" lengthAdjust="spacingAndGlyphs" stroke="#33281c" stroke-width="0.35" font-family="'Liberation Mono', monospace">G 372: HSI 8/10</text>
<rect x="903.00" y="5.00" width="1.60" height="1.40" fill="#555"/>
<rect x="903.00" y="7.50" width="1.60" height="1.40" fill="#555"/>
<rect x="903.00" y="10.00" width="1.60" height="1.40" fill="#555"/>
<rect x="903.00" y="12.50" width="1.60" height="1.40" fill="#555"/>
<rect x="906.00" y="5.00" width="1.60" height="1.40" fill="#555"/>
<rect x="906.00" y="7.50" width="1.60" height="1.40" fill="#555"/>
<rect x="906.00" y="10.00" width="1.60" height="1.40" fill="#555"/>
<rect x="906.00" y="12.50" width="1.60" height="1.40" fill="#555"/>
<rect x="909.00" y="5.00" width="1.60" height="1.40" fill="#555"/>
<rect x="909.00" y="7.50" width="1.60" height="1.40" fill="#555"/>
<rect x="909.00" y="10.00" width="1.60" height="1.40" fill="#555"/>
<rect x="909.00" y="12.50" width="1.60" height="1.40" fill="#555"/>
<rect x="915.50" y="3.00" width="115.50" height="13.90" fill="#0a74de"/>
<rect x="916.80" y="3.00" width="114.20" height="12.80" fill="#3354b4"/>
<text x="918.0" y="13.6" font-size="14.5" fill="#fff" textLength="109.5" lengthAdjust="spacingAndGlyphs" font-weight="bold" font-family="'Liberation Mono', monospace">HI1 COMB Index</text>
<rect x="1028.00" y="3.00" width="1.40" height="12.50" fill="#e08a1a"/>
<polygon points="1037,6.8 1047.2,6.8 1042.1,12.2" fill="#1c1c1c"/>
<g fill="none" stroke="#2a2a2a" stroke-width="1.6"><path d="M1065 5.8 H1062.2 a3 3 0 0 0 0 6 H1065 M1068.5 5.8 H1071.3 a3 3 0 0 1 0 6 H1068.5"/></g>
<rect x="1063.00" y="8.00" width="7.50" height="1.60" fill="#2a2a2a"/>
<rect x="1867.00" y="6.00" width="10.00" height="1.50" fill="#333"/>
<rect x="1867.00" y="9.00" width="10.00" height="1.50" fill="#333"/>
<rect x="1867.00" y="12.00" width="10.00" height="1.50" fill="#333"/>
<text x="1884.2" y="13.3" font-size="14" fill="#2a2a3a" textLength="50.3" lengthAdjust="spacingAndGlyphs">Options</text>
<g stroke="#222" stroke-width="1.6" fill="none"><path d="M1946 13 L1953 6 M1948 5.5 H1953.5 V11"/><rect x="1966" y="8" width="6" height="5"/><path d="M1968.5 8 V5.5 H1975 V10.5 H1972"/><path d="M1986 5 L1995 14 M1995 5 L1986 14"/></g>
<rect x="2.00" y="18.80" width="68.50" height="17.80" fill="#3a3a3a"/>
<rect x="72.30" y="18.80" width="49.00" height="17.80" fill="#3a3a3a"/>
<text x="5.0" y="31.9" font-size="15.5" fill="#fff" textLength="46.0" lengthAdjust="spacingAndGlyphs" font-weight="bold">Actions</text>
<text x="78.0" y="31.9" font-size="15.5" fill="#fff" textLength="25.0" lengthAdjust="spacingAndGlyphs" font-weight="bold">Edit</text>
<polygon points="58.5,25.5 64.5,25.5 61.5,30" fill="#ddd"/><polygon points="108.5,25.5 114.5,25.5 111.5,30" fill="#ddd"/>
<rect x="2.00" y="37.80" width="1995.00" height="20.50" fill="#201f1d"/>
<rect x="2.00" y="38.00" width="447.00" height="20.30" fill="#171717"/>
<rect x="3.00" y="38.50" width="28.00" height="19.50" fill="#232323"/>
<text x="7.7" y="51.7" font-size="14.5" fill="#fff" textLength="16.1" lengthAdjust="spacingAndGlyphs" font-weight="bold">1D</text>
<rect x="33.00" y="38.50" width="40.00" height="19.50" fill="#232323"/>
<text x="41.0" y="51.7" font-size="14.5" fill="#fff" textLength="25.0" lengthAdjust="spacingAndGlyphs" font-weight="bold">15D</text>
<rect x="75.00" y="38.50" width="33.00" height="19.50" fill="#232323"/>
<text x="83.0" y="51.7" font-size="14.5" fill="#fff" textLength="18.0" lengthAdjust="spacingAndGlyphs" font-weight="bold">1M</text>
<rect x="110.00" y="38.50" width="49.50" height="19.50" fill="#232323"/>
<text x="118.0" y="51.7" font-size="14.5" fill="#fff" textLength="33.5" lengthAdjust="spacingAndGlyphs" font-weight="bold">1H2M</text>
<rect x="161.00" y="38.50" width="31.00" height="19.50" fill="#232323"/>
<text x="169.0" y="51.7" font-size="14.5" fill="#fff" textLength="15.0" lengthAdjust="spacingAndGlyphs" font-weight="bold">1Y</text>
<rect x="193.50" y="38.50" width="32.00" height="19.50" fill="#232323"/>
<text x="201.6" y="51.7" font-size="14.5" fill="#fff" textLength="16.1" lengthAdjust="spacingAndGlyphs" font-weight="bold">5Y</text>
<rect x="227.00" y="38.50" width="39.00" height="19.50" fill="#232323"/>
<text x="234.5" y="51.7" font-size="14.5" fill="#fff" textLength="23.5" lengthAdjust="spacingAndGlyphs" font-weight="bold">20Y</text>
<rect x="268.00" y="38.50" width="42.00" height="19.50" fill="#232323"/>
<text x="275.8" y="51.7" font-size="14.5" fill="#fff" textLength="25.2" lengthAdjust="spacingAndGlyphs" font-weight="bold">Max</text>
<rect x="311.00" y="38.50" width="63.50" height="19.50" fill="#0f59d2"/>
<text x="316.5" y="51.7" font-size="14.5" fill="#fff" textLength="33.5" lengthAdjust="spacingAndGlyphs" font-weight="bold">Daily</text>
<polygon points="356,42.5 368,42.5 362,52.5" fill="#fff"/>
<rect x="380.50" y="38.50" width="68.50" height="19.50" fill="#232323"/>
<text x="397.0" y="51.7" font-size="14.5" fill="#fff" textLength="36.0" lengthAdjust="spacingAndGlyphs" font-weight="bold">Table</text>
<rect x="1820.00" y="38.00" width="177.00" height="20.30" fill="#171717"/>
<rect x="1822.00" y="38.00" width="22.00" height="20.30" fill="#222"/>
<rect x="1846.00" y="38.00" width="96.50" height="20.30" fill="#222"/>
<rect x="1944.00" y="38.00" width="25.00" height="20.30" fill="#222"/>
<rect x="1971.00" y="38.00" width="25.00" height="20.30" fill="#222"/>
<path d="M1833 42.5 L1828.5 47.5 L1833 52.5 M1839 42.5 L1834.5 47.5 L1839 52.5" stroke="#fff" stroke-width="1.8" fill="none"/>
<path d="M1852 54 L1853.5 49.5 L1862.5 40.5 L1866 44 L1857 53 Z" fill="#eee"/>
<text x="1871.9" y="51.8" font-size="14.8" fill="#fff" textLength="64.3" lengthAdjust="spacingAndGlyphs" font-weight="bold">Edit Chart</text>
<g stroke="#eee" fill="none" stroke-width="1.6"><path d="M1949 43 H1957 M1949 47 H1954 M1949 51 H1953 M1957 53.5 H1963"/><path d="M1953.5 52.5 L1962 42" stroke-width="2.6"/></g>
<g transform="translate(1983.4,47.3)"><circle r="3.7" fill="none" stroke="#eee" stroke-width="2.6"/><rect x="-1.35" y="-7" width="2.7" height="3.4" fill="#eee" transform="rotate(0)"/><rect x="-1.35" y="-7" width="2.7" height="3.4" fill="#eee" transform="rotate(45)"/><rect x="-1.35" y="-7" width="2.7" height="3.4" fill="#eee" transform="rotate(90)"/><rect x="-1.35" y="-7" width="2.7" height="3.4" fill="#eee" transform="rotate(135)"/><rect x="-1.35" y="-7" width="2.7" height="3.4" fill="#eee" transform="rotate(180)"/><rect x="-1.35" y="-7" width="2.7" height="3.4" fill="#eee" transform="rotate(225)"/><rect x="-1.35" y="-7" width="2.7" height="3.4" fill="#eee" transform="rotate(270)"/><rect x="-1.35" y="-7" width="2.7" height="3.4" fill="#eee" transform="rotate(315)"/></g>
<rect x="810.50" y="60.00" width="84.00" height="26.00" fill="#2b2b2b" fill-opacity="0.58"/>
<rect x="897.00" y="60.00" width="106.50" height="26.00" fill="#1b3a5a" fill-opacity="0.6"/>
<rect x="1005.50" y="60.00" width="80.50" height="26.00" fill="#2b2b2b" fill-opacity="0.58"/>
<rect x="1088.00" y="60.00" width="82.00" height="26.00" fill="#2b2b2b" fill-opacity="0.58"/>
<text x="846.0" y="78.8" font-size="16.5" fill="#d8d8d8" textLength="43.0" lengthAdjust="spacingAndGlyphs">Track</text>
<text x="931.0" y="78.8" font-size="16.5" fill="#d8d8d8" textLength="66.5" lengthAdjust="spacingAndGlyphs">Annotate</text>
<text x="1040.0" y="78.8" font-size="16.5" fill="#d8d8d8" textLength="40.0" lengthAdjust="spacingAndGlyphs">News</text>
<text x="1122.0" y="78.8" font-size="16.5" fill="#d8d8d8" textLength="42.5" lengthAdjust="spacingAndGlyphs">Zoom</text>
<g stroke="#888" stroke-width="1.3" fill="none"><circle cx="827" cy="72.5" r="3.2"/><path d="M820 72.5 H834 M827 65.5 V79.5"/><path d="M908.5 77 L917.3 68.7" stroke="#8a8a8a" stroke-width="2.4"/><path d="M911.5 78 H920" stroke="#777" stroke-width="1.2"/><path d="M1016.5 67 H1022.5 V70.5 H1016.5 Z" fill="#666" stroke="#777" stroke-width="0.8"/><path d="M1024 67 H1028 M1024 70 H1028 M1016 73.2 H1028 M1016 75.8 H1028 M1016 78.4 H1028" stroke="#707070" stroke-width="1.1"/><circle cx="1101.5" cy="70.5" r="4.2"/><path d="M1104.5 74 L1110 79.5" stroke-width="2"/></g>
<rect x="1880.50" y="62.70" width="18.50" height="18.30" fill="#555" rx="2.5"/>
<path d="M1881.5 70.8 H1898 M1881.5 73 H1898" stroke="#8a8a8a" stroke-width="0.9"/><path d="M1886.5 68.5 L1889.7 65.8 L1893 68.5 M1886.5 75.5 L1889.7 78.2 L1893 75.5" stroke="#3a3a3a" stroke-width="1.3" fill="none"/>
<rect x="413.00" y="63.80" width="247.50" height="103.00" fill="#161616" rx="5" fill-opacity="0.78"/>
<g stroke="#888" stroke-width="1.1" fill="none"><rect x="422.5" y="79" width="6.5" height="6.5"/><path d="M424 82.2 H427.5"/><path d="M426 86 V149.5 H431 M426 106 H431 M426 127.5 H431"/></g>
<rect x="435.00" y="76.30" width="16.50" height="15.50" fill="#2fc435"/>
<text x="456.5" y="91.7" font-size="17.5" fill="#f0f0f0" textLength="83.0" lengthAdjust="spacingAndGlyphs">Last Price</text>
<text x="605.5" y="91.7" font-size="17.5" fill="#f0f0f0" textLength="46.0" lengthAdjust="spacingAndGlyphs">23194</text>
<text x="456.5" y="113.0" font-size="17.5" fill="#f0f0f0" textLength="141.0" lengthAdjust="spacingAndGlyphs">High on 10/07/24</text>
<text x="605.5" y="113.0" font-size="17.5" fill="#f0f0f0" textLength="46.0" lengthAdjust="spacingAndGlyphs">23333</text>
<text x="456.5" y="134.4" font-size="17.5" fill="#f0f0f0" textLength="63.0" lengthAdjust="spacingAndGlyphs">Average</text>
<text x="605.5" y="134.4" font-size="17.5" fill="#f0f0f0" textLength="46.0" lengthAdjust="spacingAndGlyphs">17352</text>
<text x="456.5" y="155.7" font-size="17.5" fill="#f0f0f0" textLength="137.0" lengthAdjust="spacingAndGlyphs">Low on 01/22/24</text>
<text x="605.5" y="155.7" font-size="17.5" fill="#f0f0f0" textLength="46.0" lengthAdjust="spacingAndGlyphs">14796</text>
<g stroke="#999" stroke-width="1.4" fill="none"><path d="M439.5 98 H448.5 M444 98 V112"/><path d="M437 127.5 H451"/><circle cx="444" cy="127.5" r="2.2" fill="#999"/><path d="M439.5 156 H448.5 M444 142 V156"/></g>
<rect x="3.00" y="807.00" width="313.00" height="40.00" fill="#1a1a1a" rx="4" fill-opacity="0.62"/>
<rect x="13.75" y="818.75" width="16.25" height="16.25" fill="#fff"/>
<text x="35.5" y="834.5" font-size="17.5" fill="#f0f0f0" textLength="68.8" lengthAdjust="spacingAndGlyphs">RSI (14)</text>
<text x="118.5" y="834.5" font-size="17.5" fill="#f0f0f0" textLength="118.8" lengthAdjust="spacingAndGlyphs">on Close (HI1)</text>
<text x="245.9" y="834.5" font-size="17.5" fill="#f0f0f0" textLength="61.1" lengthAdjust="spacingAndGlyphs">88.4764</text>
<rect x="3.00" y="1004.80" width="232.40" height="103.60" fill="#181818" rx="4" fill-opacity="0.6"/>
<text x="105.8" y="1032.5" font-size="17.5" fill="#f0f0f0" textLength="26.0" lengthAdjust="spacingAndGlyphs">HI1</text>
<rect x="13.75" y="1038.00" width="16.25" height="16.25" fill="#fff"/>
<rect x="13.75" y="1059.50" width="16.25" height="15.50" fill="#ff0000"/>
<rect x="13.75" y="1080.75" width="16.25" height="16.00" fill="#00ee00"/>
<text x="35.0" y="1053.8" font-size="17.5" fill="#f0f0f0" textLength="102.0" lengthAdjust="spacingAndGlyphs">MACD(12,26)</text>
<text x="146.0" y="1053.8" font-size="17.5" fill="#f0f0f0" textLength="79.0" lengthAdjust="spacingAndGlyphs">1361.7064</text>
<text x="35.0" y="1075.0" font-size="17.5" fill="#f0f0f0" textLength="51.0" lengthAdjust="spacingAndGlyphs">Sig(9)</text>
<text x="154.5" y="1075.0" font-size="17.5" fill="#f0f0f0" textLength="70.5" lengthAdjust="spacingAndGlyphs">913.3204</text>
<text x="35.0" y="1096.2" font-size="17.5" fill="#f0f0f0" textLength="30.0" lengthAdjust="spacingAndGlyphs">Diff</text>
<text x="154.5" y="1096.2" font-size="17.5" fill="#f0f0f0" textLength="61.0" lengthAdjust="spacingAndGlyphs">448.386</text>
<text x="1613.8" y="1097.5" font-size="26" fill="#a8a8a8" textLength="207.5" lengthAdjust="spacingAndGlyphs" fill-opacity="0.68">Activate Windows</text>
<text x="1612.5" y="1128.0" font-size="18.5" fill="#a8a8a8" textLength="300.0" lengthAdjust="spacingAndGlyphs" fill-opacity="0.68">Go to Settings to activate Windows.</text>
</svg></body></html>
